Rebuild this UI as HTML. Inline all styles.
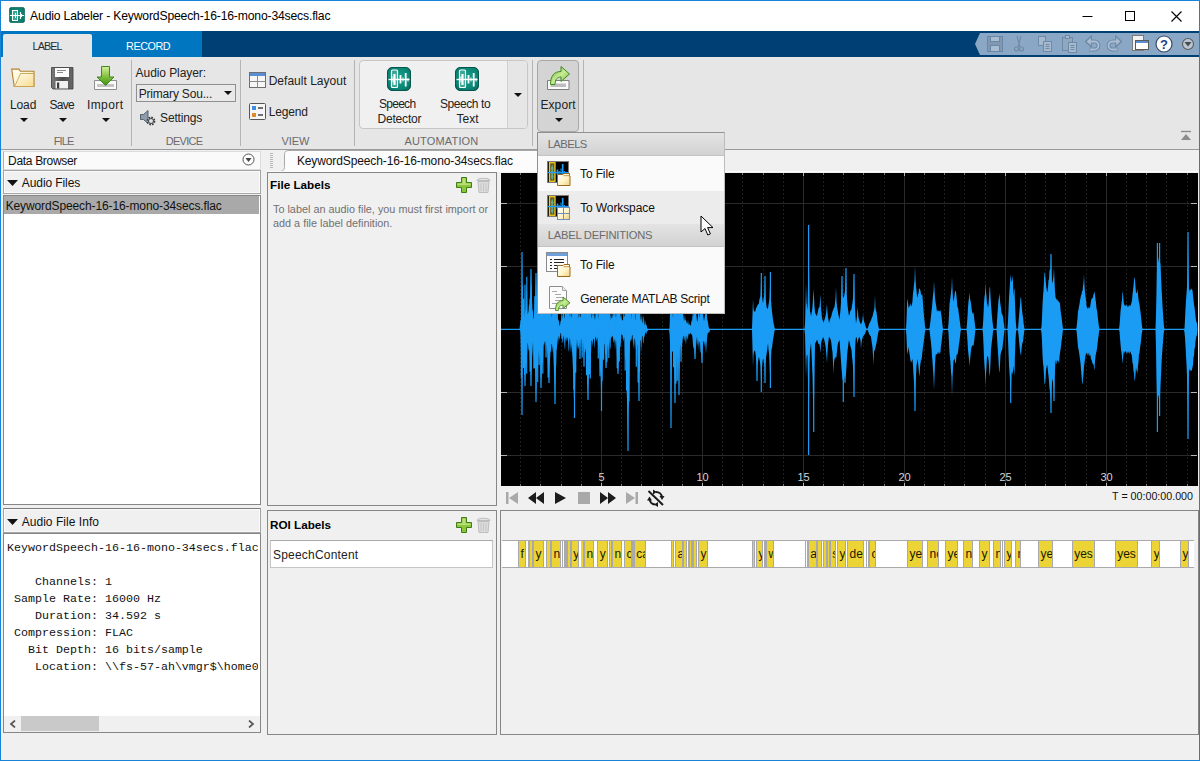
<!DOCTYPE html>
<html lang="en">
<head>
<meta charset="utf-8">
<title>Audio Labeler - KeywordSpeech-16-16-mono-34secs.flac</title>
<style>
*{box-sizing:border-box;margin:0;padding:0}
html,body{width:1200px;height:761px;overflow:hidden}
body{position:relative;background:#f0f0f0;font-family:"Liberation Sans",sans-serif;font-size:12px;color:#1a1a1a}
.abs,.abs>*{position:absolute}
#win{position:absolute;left:0;top:0;width:1200px;height:761px;border:1px solid #1883d7;pointer-events:none;z-index:50}
/* title bar */
#title{left:1px;top:1px;width:1198px;height:30px;background:#fff}
#title .t{top:8px;font-size:12.2px;color:#000;white-space:nowrap}
/* tab strip */
#tabs{left:1px;top:31px;width:1198px;height:26px;background:#003f73}
#tabL{left:2px;top:3px;width:89px;height:24px;background:#e6e6e6;border-radius:2px 2px 0 0;z-index:1}
.tb{font-size:10.8px;white-space:nowrap;z-index:2}
#tabR{left:0;top:0;width:201px;height:26px;background:#0076c0}
#qab{left:974px;top:2px;width:224px;height:22px}
/* toolstrip */
#ts{left:1px;top:57px;width:1198px;height:93px;background:#e6e6e6;border-bottom:1px solid #9a9a9a}
.sep{width:1px;top:3px;height:86px;background:#b4b4b4}
.sec{top:78px;font-size:11px;color:#6a6a6a;white-space:nowrap}
.bl{font-size:12px;color:#222;text-align:center;white-space:nowrap;line-height:15px}
.arr{width:0;height:0;border-left:4px solid transparent;border-right:4px solid transparent;border-top:4px solid #111}
.tx{white-space:nowrap;color:#222;font-size:12px}
</style>
</head>
<body>
<div id="win"></div>

<!-- TITLE BAR -->
<div id="title" class="abs">
  <svg style="left:8px;top:6px" width="16" height="16" viewBox="0 0 16 16">
    <defs><radialGradient id="ag" cx="0.5" cy="0.5" r="0.75"><stop offset="0" stop-color="#1a9a88"/><stop offset="1" stop-color="#086a5c"/></radialGradient></defs>
    <rect x="0.300" y="0.300" width="15.400" height="15.400" rx="2.500" fill="url(#ag)" stroke="#0a6256" stroke-width="0.600"/>
    <rect x="3.500" y="3.500" width="5" height="10" fill="#3aa898" stroke="#fff" stroke-width="1"/>
    <path d="M1 8.500H15M6.500 6v5" stroke="#fff" stroke-width="1" fill="none"/>
    <path d="M11.500 5v7M12.500 7v3M13.500 8v1" stroke="#fff" stroke-width="1.100" fill="none"/>
  </svg>
  <div class="t" style="left:29.10px;letter-spacing:-0.179px">Audio Labeler - KeywordSpeech-16-16-mono-34secs.flac</div>
  <svg style="left:1080px;top:9px" width="110" height="14" viewBox="0 0 110 14">
    <path d="M1.5 6.5h10" stroke="#000" stroke-width="1"/>
    <rect x="44.5" y="1.5" width="9" height="9" fill="none" stroke="#000" stroke-width="1"/>
    <path d="M90.5 1.5l10 10M100.500 1.5l-10 10" stroke="#000" stroke-width="1.1"/>
  </svg>
</div>

<!-- TAB STRIP -->
<div id="tabs" class="abs">
  <div id="tabL"></div><div class="tb" style="left:31.59px;letter-spacing:-0.950px;top:9px;color:#2a2a2a">LABEL</div>
  <div id="tabR"></div><div class="tb" style="left:125.10px;letter-spacing:-0.459px;top:9px;color:#fff">RECORD</div>
  <svg id="qab" viewBox="0 0 224 22">
    <path d="M0 11L5 0H224V22H5Z" fill="#8aa8c6"/>
    <!-- save -->
    <g fill="#7590ac" stroke="#6b87a4" stroke-width="1">
      <rect x="12.500" y="3.500" width="15" height="15" fill="#8198b2"/>
      <rect x="15.500" y="3.500" width="9" height="5" fill="#a9bdd2"/>
      <rect x="15.500" y="12.500" width="9" height="6" fill="#a9bdd2"/>
    </g>
    <!-- scissors -->
    <g fill="none" stroke="#6f8aa6" stroke-width="1.1">
      <path d="M46 3l-3 11M42 3l3 11"/><circle cx="41.500" cy="16" r="2"/><circle cx="46.500" cy="16" r="2"/>
    </g>
    <!-- copy -->
    <g fill="#a5b9cf" stroke="#6f8aa6" stroke-width="1">
      <rect x="63.500" y="3.500" width="7" height="9"/><rect x="68.500" y="8.500" width="8" height="10"/>
      <path d="M70.500 11.5h4M70.500 13.5h4M70.500 15.5h4" />
    </g>
    <!-- paste -->
    <g fill="#a5b9cf" stroke="#6f8aa6" stroke-width="1">
      <rect x="87.500" y="4.500" width="10" height="13" fill="#90a7c0"/><rect x="90.500" y="2.500" width="4" height="3"/>
      <rect x="93.500" y="9.500" width="8" height="10"/><path d="M95.500 12.500h4M95.500 14.500h4M95.500 16.500h4"/>
    </g>
    <!-- undo -->
    <g fill="none" stroke-linejoin="round">
      <path d="M115 8.500h4.500a4 4 0 0 1 0 8h-5" stroke="#6f8aa6" stroke-width="4"/>
      <path d="M116.500 2.500l-6.500 6 6.500 6z" fill="#6f8aa6" stroke="#6f8aa6"/>
      <path d="M115 8.500h4.500a4 4 0 0 1 0 8h-4.500" stroke="#a9bdd3" stroke-width="1.800"/>
      <path d="M115.800 4.800l-4.200 3.700 4.200 3.700z" fill="#a9bdd3"/>
    </g>
    <!-- redo -->
    <g fill="none" stroke-linejoin="round">
      <path d="M142 8.500h-4.500a4 4 0 0 0 0 8h5" stroke="#6f8aa6" stroke-width="4"/>
      <path d="M140.500 2.500l6.500 6-6.500 6z" fill="#6f8aa6" stroke="#6f8aa6"/>
      <path d="M142 8.500h-4.500a4 4 0 0 0 0 8h4.500" stroke="#a9bdd3" stroke-width="1.800"/>
      <path d="M141.200 4.800l4.200 3.700-4.200 3.700z" fill="#a9bdd3"/>
    </g>
    <!-- windows -->
    <g stroke="#7b7b7b" stroke-width="1">
      <rect x="157.500" y="2.500" width="11" height="15" fill="#f2f2f2"/>
      <rect x="160.500" y="7.500" width="13" height="9" fill="#fff" stroke="#5a5a5a"/>
      <rect x="161" y="8" width="12" height="2" fill="#5b8ed0" stroke="none"/>
    </g>
    <!-- help -->
    <circle cx="189" cy="11" r="8" fill="#fdfdfd" stroke="#3a4a68" stroke-width="1.2"/>
    <text x="189" y="15.500" text-anchor="middle" font-family="Liberation Sans,sans-serif" font-weight="bold" font-size="13" fill="#1f3f8a">?</text>
    <!-- dropdown -->
    <circle cx="213" cy="11" r="5.500" fill="#b9c5d3" stroke="#5c5c5c" stroke-width="1.1"/>
    <path d="M209.500 9h7l-3.500 4.500z" fill="#4a4a4a"/>
  </svg>
</div>

<!-- TOOLSTRIP -->
<div id="ts" class="abs">
  <!-- FILE -->
  <svg style="left:9px;top:9px" width="27" height="24" viewBox="0 0 27 24">
    <defs><linearGradient id="fg" x1="0" y1="0" x2="1" y2="1"><stop offset="0" stop-color="#ffffff"/><stop offset="0.45" stop-color="#fff6d2"/><stop offset="1" stop-color="#f1cf72"/></linearGradient>
    <linearGradient id="fg2" x1="0" y1="0" x2="1" y2="1"><stop offset="0" stop-color="#fffdf2"/><stop offset="1" stop-color="#f6dc8e"/></linearGradient></defs>
    <path d="M1.700 3.100h7.300l1.300 2.200h13.700v15.200h-19.800z" fill="url(#fg)" stroke="#b5822c" stroke-width="1.100"/>
    <path d="M10.500 7.500h13.300v13h-19.600c2.500-3.500 4-8 6.300-13z" fill="url(#fg2)" stroke="#c9a04e" stroke-width="0.900"/>
  </svg>
  <svg style="left:50px;top:10px" width="23" height="23" viewBox="0 0 23 23">
    <defs><linearGradient id="sg" x1="0" y1="0" x2="1" y2="0"><stop offset="0" stop-color="#7c7c7c"/><stop offset="0.5" stop-color="#4a4a4a"/><stop offset="1" stop-color="#6a6a6a"/></linearGradient></defs>
    <path d="M0.500 0.500h21.500v21.500h-20l-1.500-1.500z" fill="url(#sg)" stroke="#3a3a3a" stroke-width="0.800"/>
    <rect x="4" y="1" width="14" height="9" fill="#fbfbfb"/>
    <path d="M6 3.500h9M6 5.500h6" stroke="#8a8a8a"/>
    <rect x="4.500" y="14" width="12.500" height="7.500" fill="#f1f1f1"/>
    <rect x="6" y="15.500" width="2.200" height="6" fill="#3c3c3c"/>
  </svg>
  <svg style="left:92px;top:8px" width="25" height="26" viewBox="0 0 25 26">
    <defs><linearGradient id="gg" x1="0" y1="0" x2="0" y2="1"><stop offset="0" stop-color="#d5f0a0"/><stop offset="0.5" stop-color="#86c440"/><stop offset="1" stop-color="#3f8f18"/></linearGradient></defs>
    <path d="M1.500 15.500h22v9h-22z" fill="#fafafa" stroke="#8e8e8e"/>
    <path d="M4 19h17v3h-17z" fill="#c4c4c4"/>
    <path d="M8.500 1.500h8v10.500h4.500l-8.500 8.500-8.500-8.500h4.500z" fill="url(#gg)" stroke="#3f8a1c"/>
  </svg>
  <div class="tx" style="left:8.90px;letter-spacing:-0.068px;top:41px">Load</div>
  <div class="tx" style="left:48.60px;letter-spacing:-0.786px;top:41px">Save</div>
  <div class="tx" style="left:85.99px;letter-spacing:0.400px;top:41px">Import</div>
  <div class="arr" style="left:19px;top:61px"></div>
  <div class="arr" style="left:58px;top:61px"></div>
  <div class="arr" style="left:101px;top:61px"></div>
  <div class="sec" style="left:52.65px;letter-spacing:-0.845px">FILE</div>
  <div class="sep" style="left:130px"></div>

  <!-- DEVICE -->
  <div class="tx" style="left:134.60px;letter-spacing:-0.073px;top:9px">Audio Player:</div>
  <div style="left:135px;top:27px;width:100px;height:18px;border:1px solid #8f8f8f;background:#e9e9e9"></div>
  <div class="tx" style="left:137.70px;letter-spacing:-0.187px;top:30px">Primary Sou...</div>
  <div class="arr" style="left:223px;top:34px"></div>
  <svg style="left:138px;top:52px" width="20" height="18" viewBox="0 0 20 18">
    <path d="M1.500 5.500h3l4.500-4v13l-4.500-4h-3z" fill="#8d9cab" stroke="#56616d"/>
    <circle cx="12" cy="12" r="3.600" fill="#e6e6e6" stroke="#3c3c3c" stroke-width="1.600" stroke-dasharray="1.700 1.100"/>
    <circle cx="12" cy="12" r="2.500" fill="none" stroke="#3c3c3c" stroke-width="1"/>
  </svg>
  <div class="tx" style="left:159.10px;letter-spacing:-0.166px;top:54px">Settings</div>
  <div class="sec" style="left:164.65px;letter-spacing:-0.704px">DEVICE</div>
  <div class="sep" style="left:239px"></div>

  <!-- VIEW -->
  <svg style="left:248px;top:15px" width="17" height="16" viewBox="0 0 17 16">
    <rect x="0.500" y="0.500" width="16" height="15" fill="#f6f6f6" stroke="#6e6e6e"/>
    <rect x="1" y="1" width="15" height="3" fill="#5b8ed0"/>
    <path d="M8.500 4v11.500M0.500 9.500h16" stroke="#8a8a8a"/>
  </svg>
  <div class="tx" style="left:267.70px;letter-spacing:0.016px;top:17px">Default Layout</div>
  <svg style="left:248px;top:46px" width="17" height="17" viewBox="0 0 17 17">
    <rect x="0.500" y="0.500" width="16" height="16" rx="1" fill="#f6f6f6" stroke="#555"/>
    <rect x="3" y="3" width="4" height="4" fill="#3f8ee0"/><rect x="3" y="10" width="4" height="4" fill="#e08a2e"/>
    <path d="M9 5h5M9 12h5" stroke="#444" stroke-width="1.400"/>
  </svg>
  <div class="tx" style="left:267.70px;letter-spacing:-0.169px;top:48px">Legend</div>
  <div class="sec" style="left:280.40px;letter-spacing:-0.058px">VIEW</div>
  <div class="sep" style="left:353px"></div>

  <!-- AUTOMATION gallery -->
  <div style="left:358px;top:3px;width:169px;height:69px;border:1px solid #c6c6c6;border-radius:4px;background:#f0f0f0"></div>
  <div style="left:506px;top:4px;width:1px;height:67px;background:#d0d0d0"></div>
  <div style="left:507px;top:4px;width:19px;height:67px;background:#e6e6e6;border-radius:0 3px 3px 0"></div>
  <div class="arr" style="left:513px;top:36px"></div>
  <svg class="teal" style="left:386px;top:10px" width="24" height="24" viewBox="0 0 24 24"><use href="#teal"/></svg>
  <svg class="teal" style="left:454px;top:10px" width="24" height="24" viewBox="0 0 24 24"><use href="#teal"/></svg>
  <div class="tx" style="left:377.90px;letter-spacing:-0.701px;top:40px">Speech</div><div class="tx" style="left:376.40px;letter-spacing:-0.166px;top:54.500px">Detector</div>
  <div class="tx" style="left:438.90px;letter-spacing:-0.418px;top:40px">Speech to</div><div class="tx" style="left:455.40px;letter-spacing:0.061px;top:54.500px">Text</div>
  <div class="sec" style="left:403.40px;letter-spacing:0.175px">AUTOMATION</div>
  <div class="sep" style="left:531px"></div>

  <!-- EXPORT -->
  <div style="left:536px;top:3px;width:42px;height:72px;border:1px solid #a8a8a8;border-radius:4px;background:#d4d4d4"></div>
  <svg style="left:545px;top:8px" width="26" height="27" viewBox="0 0 26 27">
    <defs><linearGradient id="eg" x1="0" y1="0" x2="1" y2="1"><stop offset="0" stop-color="#5aa82a"/><stop offset="0.5" stop-color="#c9ec96"/><stop offset="1" stop-color="#6db53a"/></linearGradient></defs>
    <path d="M1.500 15.500h21.500v9h-21.500z" fill="#fbfbfb" stroke="#7e7e7e"/>
    <path d="M4.500 18.500h15.500v3.500h-15.500z" fill="#bdbdbd"/>
    <path d="M4.500 19.500c0-8.500 3.500-13 10.500-13v-5l8.500 7.500-8.500 7.500v-4.500c-4 0-5.500 2-6 7.500z" fill="url(#eg)" stroke="#3f8a1c"/>
  </svg>
  <div class="tx" style="left:539.40px;letter-spacing:0.103px;top:41px">Export</div>
  <div class="arr" style="left:554px;top:61px"></div>
  <div class="sep" style="left:582px"></div>

  <!-- collapse -->
  <svg style="left:1179px;top:73px" width="12" height="12" viewBox="0 0 12 12">
    <path d="M1 1.500h10" stroke="#8c8c8c" stroke-width="1.400"/><path d="M6 4l5 6h-10z" fill="#8c8c8c"/>
  </svg>
</div>

<svg width="0" height="0" style="position:absolute">
  <defs>
    <radialGradient id="tg" cx="0.5" cy="0.45" r="0.7"><stop offset="0" stop-color="#14a18e"/><stop offset="0.7" stop-color="#0b8474"/><stop offset="1" stop-color="#066256"/></radialGradient>
    <g id="teal">
      <rect x="0.500" y="0.500" width="23" height="23" rx="4.500" fill="url(#tg)" stroke="#05574d"/>
      <rect x="4.500" y="3" width="6" height="17.500" rx="1" fill="#3aa697" stroke="#fff" stroke-width="1.200"/>
      <path d="M1.500 12.500H22.500" stroke="#fff" stroke-width="1.300"/>
      <path d="M7.500 7v11" stroke="#fff" stroke-width="2.200"/>
      <path d="M13.500 8v8.500M18.700 6v13.500" stroke="#fff" stroke-width="1.800"/>
      <path d="M16 10.500v4M21 11v3.500M6 9.500v6" stroke="#fff" stroke-width="1"/>
    </g>
  </defs>
</svg>

<style>
.pn{position:absolute;border:1px solid #868686;background:#f0f0f0}
.hd{position:absolute;font-size:12px;color:#111;white-space:nowrap}
.ar{font-family:"Liberation Sans",sans-serif}
#strip{position:absolute;left:502px;top:540px;width:692px;height:28px;background:#fff;border-top:1px solid #a9a9ad;border-bottom:1px solid #a9a9ad;overflow:hidden}
#strip>*{position:absolute;top:0;height:26px}
#strip .g{background:#a9a9ad}
#strip .yy{background:#edd436}
#strip .y,#strip .yc{background:#edd436;font-size:12px;line-height:26px;color:#1a1a00;overflow:hidden;white-space:nowrap;padding-left:1.500px}
#strip .yc{text-align:center;padding-left:0}
#pop{position:absolute;left:537px;top:132px;width:188px;height:182px;border:1px solid #909090;border-right-color:#bcbcbc;border-bottom-color:#bcbcbc;background:#fafafa;z-index:20}
#pop>*{position:absolute}
#pop .ph{left:0;width:186px;height:23px;background:linear-gradient(#e4e4e4,#d2d2d2);border-bottom:1px solid #c4c4c4}
#pop .pt{color:#6a6a6a;font-size:11.200px;white-space:nowrap;margin-top:0}
#pop .pi{font-size:12px;color:#111;white-space:nowrap}
.mono{font-family:"Liberation Mono",monospace;font-size:11.667px;line-height:17px;white-space:pre;color:#111}
</style>

<!-- DATA BROWSER -->
<div class="abs">
  <div style="left:3px;top:151px;width:258px;height:19px;border:1px solid #dcdcdc;border-left-color:#b0b0b0;background:#fafafa"></div>
  <div class="hd" style="left:8.10px;letter-spacing:-0.318px;top:154px">Data Browser</div>
  <svg style="left:242px;top:153px" width="13" height="13" viewBox="0 0 13 13"><circle cx="6.500" cy="6.500" r="5.500" fill="#fdfdfd" stroke="#555" stroke-width="1"/><path d="M3.500 5h6l-3 4z" fill="#444"/></svg>

  <div style="left:3px;top:170px;width:258px;height:24px;border:1px solid #a5a5a5;background:#f0f0f0;box-shadow:inset 0 0 0 1px #fafafa"></div>
  <svg style="left:7px;top:180px" width="11" height="7" viewBox="0 0 11 7"><path d="M0 0h11l-5.500 6z" fill="#111"/></svg>
  <div class="hd" style="left:21.80px;letter-spacing:-0.087px;top:176px">Audio Files</div>
  <div style="left:3px;top:195px;width:258px;height:310px;border:1px solid #868686;background:#fff"></div>
  <div style="left:4px;top:196px;width:255px;height:18px;background:#a9a9a9"></div>
  <div class="hd" style="left:5.65px;letter-spacing:-0.112px;top:199px">KeywordSpeech-16-16-mono-34secs.flac</div>

  <div style="left:3px;top:508px;width:258px;height:25px;border:1px solid #a5a5a5;border-top-color:#7c7c7c;background:#f0f0f0;box-shadow:inset 0 0 0 1px #fafafa"></div>
  <svg style="left:7px;top:519px" width="11" height="7" viewBox="0 0 11 7"><path d="M0 0h11l-5.500 6z" fill="#111"/></svg>
  <div class="hd" style="left:21.70px;letter-spacing:0.042px;top:515px">Audio File Info</div>
  <div style="left:3px;top:533px;width:258px;height:200px;border:1px solid #868686;background:#fff;overflow:hidden">
    <div class="mono" style="position:absolute;left:3px;top:6px;width:251px;overflow:hidden">KeywordSpeech-16-16-mono-34secs.flac

    Channels: 1
 Sample Rate: 16000 Hz
    Duration: 34.592 s
 Compression: FLAC
   Bit Depth: 16 bits/sample
    Location: \\fs-57-ah\vmgr$\home0</div>
    <div style="position:absolute;left:0;top:182px;width:256px;height:16px;background:#f0f0f0"></div>
    <div style="position:absolute;left:17px;top:182px;width:78px;height:15px;background:#c9c9c9"></div>
    <svg style="position:absolute;left:5px;top:186px" width="8" height="8" viewBox="0 0 8 8"><path d="M6 0.500l-4 3.500 4 3.500" fill="none" stroke="#555" stroke-width="1.700"/></svg>
    <svg style="position:absolute;left:243px;top:186px" width="8" height="8" viewBox="0 0 8 8"><path d="M2 0.500l4 3.500-4 3.500" fill="none" stroke="#555" stroke-width="1.700"/></svg>
  </div>
</div>

<!-- DOCUMENT TAB -->
<div class="abs">
  <svg style="left:270px;top:153px" width="3" height="16" viewBox="0 0 3 16"><path d="M1.500 0v16" stroke="#b8b8b8" stroke-width="3" stroke-dasharray="1 1"/></svg>
  <svg style="left:279px;top:150px" width="261" height="22" viewBox="0 0 261 22">
    <path d="M0 21.500c4 0 5.500-1.500 5.500-5v-12c0-3 1.500-4 4.500-4h251v21z" fill="#fcfcfc"/>
    <path d="M0 21.500c4 0 5.500-1.500 5.500-5v-12c0-3 1.500-4 4.500-4h251" fill="none" stroke="#a8a8a8"/>
  </svg>
  <div class="hd" style="left:296.90px;letter-spacing:-0.112px;top:154px">KeywordSpeech-16-16-mono-34secs.flac</div>
  <div style="left:267px;top:171px;width:931px;height:1px;background:#fbfbfb"></div>
</div>

<!-- FILE LABELS PANEL -->
<div class="pn" style="left:267px;top:172px;width:230px;height:334px"></div>
<div class="abs ar">
  <div style="left:270px;top:178px;font-weight:bold;font-size:11.700px;color:#000;white-space:nowrap">File Labels</div>
  <svg style="left:456px;top:177px" width="16" height="16" viewBox="0 0 16 16"><use href="#plus"/></svg>
  <svg style="left:476px;top:177px" width="15" height="16" viewBox="0 0 15 16"><use href="#trash"/></svg>
  <div style="left:273px;top:202px;font-size:10.850px;line-height:14px;color:#707070;white-space:nowrap">To label an audio file, you must first import or<br>add a file label definition.</div>
</div>

<!-- ROI LABELS PANEL -->
<div class="pn" style="left:267px;top:510px;width:230px;height:225px"></div>
<div class="abs ar">
  <div style="left:270px;top:518px;font-weight:bold;font-size:11.700px;color:#000;white-space:nowrap">ROI Labels</div>
  <svg style="left:456px;top:517px" width="16" height="16" viewBox="0 0 16 16"><use href="#plus"/></svg>
  <svg style="left:476px;top:517px" width="15" height="16" viewBox="0 0 15 16"><use href="#trash"/></svg>
  <div style="left:270px;top:540px;width:223px;height:28px;background:#fff;border:1px solid #c4c4c4;border-top-color:#a9a9a9"></div>
  <div style="left:273px;top:548px;font-size:12px;letter-spacing:0.2px;color:#222">SpeechContent</div>
</div>

<!-- WAVEFORM -->
<div style="position:absolute;left:501px;top:173px;width:697px;height:313px;background:#000"></div>
<svg style="position:absolute;left:0;top:0" width="1200" height="761" viewBox="0 0 1200 761">
  <g stroke="#2a2a2a" stroke-width="1">
    <path d="M501 203.500H1197M501 266.500H1197M501 392.500H1197M501 455.500H1197"/>
    <path d="M601.5 173V486M702.5 173V486M803.5 173V486M904.5 173V486M1005.5 173V486M1106.5 173V486"/>
  </g>
  <g stroke="#1e1e1e" stroke-width="1" stroke-dasharray="2 2"><path d="M520.5 173V486M540.5 173V486M561.5 173V486M581.5 173V486M621.5 173V486M641.5 173V486M662.5 173V486M682.5 173V486M722.5 173V486M742.5 173V486M763.5 173V486M783.5 173V486M823.5 173V486M843.5 173V486M863.5 173V486M884.5 173V486M924.5 173V486M944.5 173V486M964.5 173V486M985.5 173V486M1025.5 173V486M1045.5 173V486M1065.5 173V486M1086.5 173V486M1126.5 173V486M1146.5 173V486M1166.5 173V486M1187.5 173V486"/></g>
  <g stroke="#b4b4b4" stroke-width="1">
    <path d="M501 203.500h6M501 266.500h6M501 392.500h6M501 455.500h6M1191 203.500h6M1191 266.500h6M1191 392.500h6M1191 455.500h6"/>
    <path d="M601.5 173v3M601.5 483v3M702.5 173v3M702.5 483v3M803.5 173v3M803.5 483v3M904.5 173v3M904.5 483v3M1005.5 173v3M1005.5 483v3M1106.5 173v3M1106.5 483v3"/><path stroke="#7a7a7a" d="M520.5 173v2M520.5 484v2M540.5 173v2M540.5 484v2M561.5 173v2M561.5 484v2M581.5 173v2M581.5 484v2M621.5 173v2M621.5 484v2M641.5 173v2M641.5 484v2M662.5 173v2M662.5 484v2M682.5 173v2M682.5 484v2M722.5 173v2M722.5 484v2M742.5 173v2M742.5 484v2M763.5 173v2M763.5 484v2M783.5 173v2M783.5 484v2M823.5 173v2M823.5 484v2M843.5 173v2M843.5 484v2M863.5 173v2M863.5 484v2M884.5 173v2M884.5 484v2M924.5 173v2M924.5 484v2M944.5 173v2M944.5 484v2M964.5 173v2M964.5 484v2M985.5 173v2M985.5 484v2M1025.5 173v2M1025.5 484v2M1045.5 173v2M1045.5 484v2M1065.5 173v2M1065.5 484v2M1086.5 173v2M1086.5 484v2M1126.5 173v2M1126.5 484v2M1146.5 173v2M1146.5 484v2M1166.5 173v2M1166.5 484v2M1187.5 173v2M1187.5 484v2"/>
  </g>
  <g transform="translate(501 173)"><polygon fill="#1a9cf5" points="0.0,155.8 0.5,155.8 1.0,155.8 1.5,155.8 2.0,155.8 2.5,155.8 3.0,155.8 3.5,155.8 4.0,155.8 4.5,155.8 5.0,155.8 5.5,155.8 6.0,155.8 6.5,155.8 7.0,155.8 7.5,155.8 8.0,155.8 8.5,155.8 9.0,155.8 9.5,155.8 10.0,155.8 10.5,155.8 11.0,155.8 11.5,155.8 12.0,155.8 12.5,155.8 13.0,155.8 13.5,155.8 14.0,155.8 14.5,155.8 15.0,155.8 15.5,155.8 16.0,155.8 16.5,155.8 17.0,155.8 17.5,155.8 18.0,155.8 18.5,155.8 19.0,152.2 19.5,147.1 20.0,146.7 20.5,116.9 21.0,79.0 21.5,111.3 22.0,134.5 22.5,126.3 23.0,144.1 23.5,140.9 24.0,113.0 24.5,136.6 25.0,139.0 25.5,117.1 26.0,116.3 26.5,141.1 27.0,140.7 27.5,138.1 28.0,130.4 28.5,132.7 29.0,121.2 29.5,108.9 30.0,96.0 30.5,111.5 31.0,125.9 31.5,139.1 32.0,135.4 32.5,146.1 33.0,144.6 33.5,134.7 34.0,127.9 34.5,114.4 35.0,100.0 35.5,114.4 36.0,127.9 36.5,124.5 37.0,129.3 37.5,142.2 38.0,137.1 38.5,126.2 39.0,126.4 39.5,112.2 40.0,97.0 40.5,107.1 41.0,112.8 41.5,126.1 42.0,134.8 42.5,140.7 43.0,127.6 43.5,135.2 44.0,142.5 44.5,129.8 45.0,125.9 45.5,138.3 46.0,136.2 46.5,117.9 47.0,120.2 47.5,111.3 48.0,102.0 48.5,113.7 49.0,124.7 49.5,125.6 50.0,132.5 50.5,145.1 51.0,138.6 51.5,142.5 52.0,129.5 52.5,132.3 53.0,120.6 53.5,108.2 54.0,95.0 54.5,110.7 55.0,115.4 55.5,131.7 56.0,138.6 56.5,129.1 57.0,146.0 57.5,147.4 58.0,147.9 58.5,152.4 59.0,152.7 59.5,148.3 60.0,147.7 60.5,140.6 61.0,137.7 61.5,146.4 62.0,137.2 62.5,125.7 63.0,145.2 63.5,144.2 64.0,132.2 64.5,116.8 65.0,127.6 65.5,117.6 66.0,107.0 66.5,115.4 67.0,123.5 67.5,131.2 68.0,138.5 68.5,135.9 69.0,145.0 69.5,135.2 70.0,137.6 70.5,145.1 71.0,140.9 71.5,133.7 72.0,124.6 72.5,113.3 73.0,101.4 73.5,89.0 74.0,106.2 74.5,122.4 75.0,137.1 75.5,136.8 76.0,138.7 76.5,127.6 77.0,126.7 77.5,145.0 78.0,144.3 78.5,136.3 79.0,143.7 79.5,144.2 80.0,138.8 80.5,117.9 81.0,138.1 81.5,121.9 82.0,125.0 82.5,140.5 83.0,129.9 83.5,136.5 84.0,143.2 84.5,130.3 85.0,111.8 85.5,123.4 86.0,116.9 86.5,107.1 87.0,97.0 87.5,109.7 88.0,121.8 88.5,133.1 89.0,137.1 89.5,125.4 90.0,134.2 90.5,144.7 91.0,144.6 91.5,136.4 92.0,139.1 92.5,143.1 93.0,135.7 93.5,143.7 94.0,147.0 94.5,141.3 95.0,132.8 95.5,138.9 96.0,128.2 96.5,137.5 97.0,146.5 97.5,143.7 98.0,129.5 98.5,137.0 99.0,121.3 99.5,116.7 100.0,108.5 100.5,92.0 101.0,108.5 101.5,123.9 102.0,130.3 102.5,137.3 103.0,125.0 103.5,131.3 104.0,140.9 104.5,129.5 105.0,117.0 105.5,123.7 106.0,130.2 106.5,133.9 107.0,132.5 107.5,142.7 108.0,131.5 108.5,133.8 109.0,147.9 109.5,138.6 110.0,144.5 110.5,146.1 111.0,138.1 111.5,145.4 112.0,139.3 112.5,136.2 113.0,144.7 113.5,130.5 114.0,126.1 114.5,142.4 115.0,145.1 115.5,137.8 116.0,128.8 116.5,117.9 117.0,109.0 117.5,117.1 118.0,124.8 118.5,132.2 119.0,139.2 119.5,145.6 120.0,134.8 120.5,144.7 121.0,147.3 121.5,147.2 122.0,147.3 122.5,138.1 123.0,130.3 123.5,143.6 124.0,143.5 124.5,128.1 125.0,131.1 125.5,127.2 126.0,113.1 126.5,97.9 127.0,82.0 127.5,105.6 128.0,107.2 128.5,130.0 129.0,141.0 129.5,128.3 130.0,133.5 130.5,146.5 131.0,138.5 131.5,140.1 132.0,130.8 132.5,140.5 133.0,130.9 133.5,139.7 134.0,146.9 134.5,146.0 135.0,127.7 135.5,125.4 136.0,138.8 136.5,129.2 137.0,132.3 137.5,122.7 138.0,107.0 138.5,122.7 139.0,134.5 139.5,145.0 140.0,148.2 140.5,144.9 141.0,141.2 141.5,149.7 142.0,149.8 142.5,142.0 143.0,146.1 143.5,151.1 144.0,152.8 144.5,147.0 145.0,152.3 145.5,151.3 146.0,154.2 146.5,155.6 147.0,155.8 147.5,155.8 148.0,155.8 148.5,155.8 149.0,155.8 149.5,155.8 150.0,155.8 150.5,155.8 151.0,155.8 151.5,155.8 152.0,155.8 152.5,155.8 153.0,155.8 153.5,155.8 154.0,155.8 154.5,155.8 155.0,155.8 155.5,155.8 156.0,155.8 156.5,155.8 157.0,155.8 157.5,155.8 158.0,155.8 158.5,155.8 159.0,155.8 159.5,155.8 160.0,155.8 160.5,155.8 161.0,155.8 161.5,155.8 162.0,155.8 162.5,155.8 163.0,155.8 163.5,155.8 164.0,155.8 164.5,155.8 165.0,155.8 165.5,155.8 166.0,155.8 166.5,155.8 167.0,155.8 167.5,155.8 168.0,155.8 168.5,155.4 169.0,140.6 169.5,121.4 170.0,95.0 170.5,120.6 171.0,123.2 171.5,138.1 172.0,145.8 172.5,131.4 173.0,128.9 173.5,115.9 174.0,102.0 174.5,119.3 175.0,135.0 175.5,136.1 176.0,129.3 176.5,144.3 177.0,133.8 177.5,117.2 178.0,99.0 178.5,123.0 179.0,143.3 179.5,133.2 180.0,135.5 180.5,133.4 181.0,117.0 181.5,129.5 182.0,140.9 182.5,142.9 183.0,148.2 183.5,145.7 184.0,141.7 184.5,147.5 185.0,147.2 185.5,149.1 186.0,150.6 186.5,150.3 187.0,146.8 187.5,150.8 188.0,152.2 188.5,149.7 189.0,152.5 189.5,152.6 190.0,152.0 190.5,146.3 191.0,149.2 191.5,142.2 192.0,134.9 192.5,144.1 193.0,138.1 193.5,131.7 194.0,125.0 194.5,131.7 195.0,138.1 195.5,142.7 196.0,148.3 196.5,148.5 197.0,141.9 197.5,130.5 198.0,135.6 198.5,145.0 199.0,142.8 199.5,137.3 200.0,131.5 200.5,125.4 201.0,119.0 201.5,130.9 202.0,141.7 202.5,147.9 203.0,139.6 203.5,148.2 204.0,142.5 204.5,135.0 205.0,125.0 205.5,135.0 206.0,144.1 206.5,147.0 207.0,149.6 207.5,153.2 208.0,155.1 208.5,155.8 209.0,155.8 209.5,155.8 210.0,155.8 210.5,155.8 211.0,155.8 211.5,155.8 212.0,155.8 212.5,155.8 213.0,155.8 213.5,155.8 214.0,155.8 214.5,155.8 215.0,155.8 215.5,155.8 216.0,155.8 216.5,155.8 217.0,155.8 217.5,155.8 218.0,155.8 218.5,155.8 219.0,155.8 219.5,155.8 220.0,155.8 220.5,155.8 221.0,155.8 221.5,155.8 222.0,155.8 222.5,155.8 223.0,155.8 223.5,155.8 224.0,155.8 224.5,155.8 225.0,155.8 225.5,155.8 226.0,155.8 226.5,155.8 227.0,155.8 227.5,155.8 228.0,155.8 228.5,155.8 229.0,155.8 229.5,155.8 230.0,155.8 230.5,155.8 231.0,155.8 231.5,155.8 232.0,155.8 232.5,155.8 233.0,155.8 233.5,155.8 234.0,155.8 234.5,155.8 235.0,155.8 235.5,155.8 236.0,155.8 236.5,155.8 237.0,155.8 237.5,155.8 238.0,155.8 238.5,155.8 239.0,155.8 239.5,155.8 240.0,155.8 240.5,155.8 241.0,155.8 241.5,155.8 242.0,155.8 242.5,155.8 243.0,155.8 243.5,155.8 244.0,155.8 244.5,155.8 245.0,155.8 245.5,155.8 246.0,155.8 246.5,155.8 247.0,155.8 247.5,155.8 248.0,155.8 248.5,155.8 249.0,155.8 249.5,155.8 250.0,155.8 250.5,155.8 251.0,155.8 251.5,140.9 252.0,126.0 252.5,135.6 253.0,138.3 253.5,138.2 254.0,138.9 254.5,137.6 255.0,135.3 255.5,134.5 256.0,133.2 256.5,132.6 257.0,131.1 257.5,131.4 258.0,129.7 258.5,125.5 259.0,125.3 259.5,122.7 260.0,109.5 260.5,108.6 261.0,123.3 261.5,126.9 262.0,130.4 262.5,125.9 263.0,123.8 263.5,119.9 264.0,103.0 264.5,125.3 265.0,128.7 265.5,133.4 266.0,135.1 266.5,135.7 267.0,135.5 267.5,131.4 268.0,128.9 268.5,125.6 269.0,111.3 269.5,104.9 270.0,127.4 270.5,133.1 271.0,138.4 271.5,142.4 272.0,146.8 272.5,149.9 273.0,152.1 273.5,154.6 274.0,155.8 274.5,155.8 275.0,155.8 275.5,155.8 276.0,155.8 276.5,155.8 277.0,155.8 277.5,155.8 278.0,155.8 278.5,155.8 279.0,155.8 279.5,155.8 280.0,155.8 280.5,155.8 281.0,155.8 281.5,155.8 282.0,155.8 282.5,155.8 283.0,155.8 283.5,155.8 284.0,155.8 284.5,155.8 285.0,155.8 285.5,155.8 286.0,155.8 286.5,155.8 287.0,155.8 287.5,155.8 288.0,155.8 288.5,155.8 289.0,155.8 289.5,155.8 290.0,155.8 290.5,155.8 291.0,155.8 291.5,155.8 292.0,155.8 292.5,155.8 293.0,155.8 293.5,155.8 294.0,155.8 294.5,155.8 295.0,155.8 295.5,155.8 296.0,155.8 296.5,155.8 297.0,155.8 297.5,155.8 298.0,155.8 298.5,155.8 299.0,155.8 299.5,155.8 300.0,155.8 300.5,155.8 301.0,155.8 301.5,155.8 302.0,155.8 302.5,155.8 303.0,155.8 303.5,155.8 304.0,151.5 304.5,132.7 305.0,110.0 305.5,129.4 306.0,133.3 306.5,137.0 307.0,112.5 307.5,62.8 308.0,93.5 308.5,125.7 309.0,138.4 309.5,139.9 310.0,143.4 310.5,140.2 311.0,137.5 311.5,133.5 312.0,125.9 312.5,115.4 313.0,124.3 313.5,133.7 314.0,139.1 314.5,140.7 315.0,141.5 315.5,142.4 316.0,143.3 316.5,140.0 317.0,138.4 317.5,135.0 318.0,135.0 318.5,133.8 319.0,128.3 319.5,121.1 320.0,135.1 320.5,139.8 321.0,144.7 321.5,146.9 322.0,147.8 322.5,149.9 323.0,148.6 323.5,146.6 324.0,145.0 324.5,143.2 325.0,140.2 325.5,135.7 326.0,131.0 326.5,139.1 327.0,144.5 327.5,146.8 328.0,150.2 328.5,148.1 329.0,146.9 329.5,145.0 330.0,144.2 330.5,142.4 331.0,140.3 331.5,138.6 332.0,137.6 332.5,135.6 333.0,135.3 333.5,133.7 334.0,130.1 334.5,124.8 335.0,114.0 335.5,127.5 336.0,133.6 336.5,136.1 337.0,139.4 337.5,142.0 338.0,144.4 338.5,146.7 339.0,141.7 339.5,136.8 340.0,129.4 340.5,116.7 341.0,103.0 341.5,121.8 342.0,125.6 342.5,124.2 343.0,123.5 343.5,121.1 344.0,117.9 344.5,109.6 345.0,95.0 345.5,120.6 346.0,125.4 346.5,131.7 347.0,136.6 347.5,140.0 348.0,142.8 348.5,141.7 349.0,139.7 349.5,137.1 350.0,137.7 350.5,135.6 351.0,132.8 351.5,129.3 352.0,125.6 352.5,115.2 353.0,101.0 353.5,126.1 354.0,134.2 354.5,143.2 355.0,150.3 355.5,147.2 356.0,143.2 356.5,134.0 357.0,138.6 357.5,144.5 358.0,146.3 358.5,148.2 359.0,149.2 359.5,150.5 360.0,151.6 360.5,150.1 361.0,148.8 361.5,145.9 362.0,141.0 362.5,145.9 363.0,148.3 363.5,149.7 364.0,151.5 364.5,152.9 365.0,154.5 365.5,155.8 366.0,155.8 366.5,155.8 367.0,154.4 367.5,153.1 368.0,151.3 368.5,150.3 369.0,149.3 369.5,148.4 370.0,146.9 370.5,145.8 371.0,144.3 371.5,143.4 372.0,141.0 372.5,139.1 373.0,137.2 373.5,134.2 374.0,122.0 374.5,134.8 375.0,137.8 375.5,139.1 376.0,143.0 376.5,147.8 377.0,151.2 377.5,153.8 378.0,155.8 378.5,155.8 379.0,155.8 379.5,155.8 380.0,155.8 380.5,155.8 381.0,155.8 381.5,155.8 382.0,155.8 382.5,155.8 383.0,155.8 383.5,155.8 384.0,155.8 384.5,155.8 385.0,155.8 385.5,155.8 386.0,155.8 386.5,155.8 387.0,155.8 387.5,155.8 388.0,155.8 388.5,155.8 389.0,155.8 389.5,155.8 390.0,155.8 390.5,155.8 391.0,155.8 391.5,155.8 392.0,155.8 392.5,155.8 393.0,155.8 393.5,155.8 394.0,155.8 394.5,155.8 395.0,155.8 395.5,155.8 396.0,155.8 396.5,155.8 397.0,155.8 397.5,155.8 398.0,155.8 398.5,155.8 399.0,155.8 399.5,155.8 400.0,155.8 400.5,155.8 401.0,155.8 401.5,155.8 402.0,155.8 402.5,155.8 403.0,155.8 403.5,155.8 404.0,155.8 404.5,155.8 405.0,155.8 405.5,147.2 406.0,131.0 406.5,125.5 407.0,129.3 407.5,134.2 408.0,135.1 408.5,131.9 409.0,133.3 409.5,129.8 410.0,132.4 410.5,133.4 411.0,131.6 411.5,127.8 412.0,120.0 412.5,116.9 413.0,111.8 413.5,107.4 414.0,93.0 414.5,105.5 415.0,113.5 415.5,117.8 416.0,122.8 416.5,124.8 417.0,121.2 417.5,120.6 418.0,115.7 418.5,115.4 419.0,116.2 419.5,118.1 420.0,120.9 420.5,122.7 421.0,120.8 421.5,123.0 422.0,130.8 422.5,136.7 423.0,143.3 423.5,148.1 424.0,153.3 424.5,155.8 425.0,155.8 425.5,155.8 426.0,155.8 426.5,155.8 427.0,155.8 427.5,155.8 428.0,155.8 428.5,154.9 429.0,151.9 429.5,147.8 430.0,143.3 430.5,138.0 431.0,134.0 431.5,127.9 432.0,122.3 432.5,118.3 433.0,108.0 433.5,116.9 434.0,124.5 434.5,128.8 435.0,131.7 435.5,135.1 436.0,138.9 436.5,137.3 437.0,137.6 437.5,137.8 438.0,138.5 438.5,138.2 439.0,137.8 439.5,137.0 440.0,140.4 440.5,143.1 441.0,148.1 441.5,152.4 442.0,155.8 442.5,155.8 443.0,155.8 443.5,155.8 444.0,155.8 444.5,155.8 445.0,155.8 445.5,155.8 446.0,155.8 446.5,155.8 447.0,155.8 447.5,150.4 448.0,141.7 448.5,130.8 449.0,128.1 449.5,123.5 450.0,118.9 450.5,115.1 451.0,104.0 451.5,115.6 452.0,125.0 452.5,128.8 453.0,125.9 453.5,122.4 454.0,118.5 454.5,117.7 455.0,118.8 455.5,123.2 456.0,129.4 456.5,134.4 457.0,134.5 457.5,138.2 458.0,142.0 458.5,146.0 459.0,149.4 459.5,154.0 460.0,155.8 460.5,155.8 461.0,155.8 461.5,155.8 462.0,155.8 462.5,155.8 463.0,155.8 463.5,155.8 464.0,155.8 464.5,155.8 465.0,155.8 465.5,155.8 466.0,151.1 466.5,143.2 467.0,134.5 467.5,128.6 468.0,124.9 468.5,118.9 469.0,125.7 469.5,127.8 470.0,130.7 470.5,134.7 471.0,138.8 471.5,140.7 472.0,139.4 472.5,140.1 473.0,143.2 473.5,148.1 474.0,152.0 474.5,155.8 475.0,155.8 475.5,155.8 476.0,155.8 476.5,155.8 477.0,155.8 477.5,155.8 478.0,155.8 478.5,155.8 479.0,155.8 479.5,155.8 480.0,155.8 480.5,155.8 481.0,155.8 481.5,155.8 482.0,151.2 482.5,141.5 483.0,129.9 483.5,124.0 484.0,120.8 484.5,110.1 485.0,119.1 485.5,123.4 486.0,131.2 486.5,131.3 487.0,134.9 487.5,131.6 488.0,124.5 488.5,115.1 489.0,113.6 489.5,123.2 490.0,130.9 490.5,137.7 491.0,144.1 491.5,148.4 492.0,152.7 492.5,155.8 493.0,155.8 493.5,155.8 494.0,155.8 494.5,155.8 495.0,155.8 495.5,155.8 496.0,147.7 496.5,140.3 497.0,134.0 497.5,126.9 498.0,124.1 498.5,120.2 499.0,127.7 499.5,132.0 500.0,135.0 500.5,139.2 501.0,141.6 501.5,141.6 502.0,144.1 502.5,147.5 503.0,151.3 503.5,155.3 504.0,155.8 504.5,155.8 505.0,155.8 505.5,155.8 506.0,155.8 506.5,155.8 507.0,147.8 507.5,136.5 508.0,125.3 508.5,117.5 509.0,109.5 509.5,101.8 510.0,105.0 510.5,109.5 511.0,107.2 511.5,102.2 512.0,109.2 512.5,122.9 513.0,116.8 513.5,115.7 514.0,130.6 514.5,142.9 515.0,152.3 515.5,155.8 516.0,155.8 516.5,155.8 517.0,155.8 517.5,149.4 518.0,143.2 518.5,137.2 519.0,131.8 519.5,124.7 520.0,124.1 520.5,130.5 521.0,137.1 521.5,141.2 522.0,144.2 522.5,149.5 523.0,152.9 523.5,155.8 524.0,155.8 524.5,155.8 525.0,155.8 525.5,155.8 526.0,155.8 526.5,155.8 527.0,155.8 527.5,155.8 528.0,155.8 528.5,155.8 529.0,155.8 529.5,155.8 530.0,155.8 530.5,155.8 531.0,155.8 531.5,155.8 532.0,155.8 532.5,155.8 533.0,155.8 533.5,155.8 534.0,155.8 534.5,155.8 535.0,155.8 535.5,155.8 536.0,155.8 536.5,155.8 537.0,155.8 537.5,155.8 538.0,155.8 538.5,155.8 539.0,155.8 539.5,155.8 540.0,155.8 540.5,153.6 541.0,144.6 541.5,131.6 542.0,123.0 542.5,117.4 543.0,106.6 543.5,99.1 544.0,100.6 544.5,106.0 545.0,111.7 545.5,115.5 546.0,117.9 546.5,119.2 547.0,114.2 547.5,107.1 548.0,106.5 548.5,97.6 549.0,96.2 549.5,96.2 550.0,81.0 550.5,100.0 551.0,108.5 551.5,110.3 552.0,106.3 552.5,102.7 553.0,94.0 553.5,108.3 554.0,118.4 554.5,124.3 555.0,125.4 555.5,126.0 556.0,127.7 556.5,125.7 557.0,128.4 557.5,127.7 558.0,129.2 558.5,129.5 559.0,130.6 559.5,136.7 560.0,140.9 560.5,143.8 561.0,148.0 561.5,152.5 562.0,155.8 562.5,155.8 563.0,155.8 563.5,155.8 564.0,155.8 564.5,155.8 565.0,155.8 565.5,155.8 566.0,155.8 566.5,155.8 567.0,155.8 567.5,155.8 568.0,155.8 568.5,155.8 569.0,155.8 569.5,155.8 570.0,155.8 570.5,155.8 571.0,155.8 571.5,155.8 572.0,155.8 572.5,155.8 573.0,155.8 573.5,155.8 574.0,155.8 574.5,155.8 575.0,155.8 575.5,154.9 576.0,150.3 576.5,145.2 577.0,138.4 577.5,136.3 578.0,133.4 578.5,131.0 579.0,127.4 579.5,124.9 580.0,122.3 580.5,121.4 581.0,118.3 581.5,118.1 582.0,113.1 582.5,109.7 583.0,101.0 583.5,113.0 584.0,118.9 584.5,123.4 585.0,126.7 585.5,133.2 586.0,134.6 586.5,136.0 587.0,133.5 587.5,135.7 588.0,133.4 588.5,135.6 589.0,134.7 589.5,131.2 590.0,128.2 590.5,125.8 591.0,125.5 591.5,125.1 592.0,124.4 592.5,121.2 593.0,120.0 593.5,118.4 594.0,122.2 594.5,125.9 595.0,130.0 595.5,135.5 596.0,137.5 596.5,141.2 597.0,146.1 597.5,150.1 598.0,153.8 598.5,155.8 599.0,155.8 599.5,155.8 600.0,155.8 600.5,155.8 601.0,155.8 601.5,155.8 602.0,155.8 602.5,155.8 603.0,155.8 603.5,155.8 604.0,155.8 604.5,155.8 605.0,155.8 605.5,155.8 606.0,155.8 606.5,155.8 607.0,155.8 607.5,155.8 608.0,155.8 608.5,155.8 609.0,155.8 609.5,155.8 610.0,155.8 610.5,155.8 611.0,155.8 611.5,155.8 612.0,155.8 612.5,155.8 613.0,155.8 613.5,155.8 614.0,155.8 614.5,155.8 615.0,155.8 615.5,155.8 616.0,155.8 616.5,155.8 617.0,155.8 617.5,155.8 618.0,155.8 618.5,152.6 619.0,146.4 619.5,138.4 620.0,134.4 620.5,130.2 621.0,126.5 621.5,118.0 622.0,121.2 622.5,127.2 623.0,131.6 623.5,131.8 624.0,133.2 624.5,132.3 625.0,133.0 625.5,131.4 626.0,131.7 626.5,134.1 627.0,133.7 627.5,133.5 628.0,131.7 628.5,133.4 629.0,131.0 629.5,133.5 630.0,131.3 630.5,129.6 631.0,127.4 631.5,121.5 632.0,117.3 632.5,112.7 633.0,106.9 633.5,104.0 634.0,107.2 634.5,113.6 635.0,119.4 635.5,119.9 636.0,119.7 636.5,115.6 637.0,122.0 637.5,126.1 638.0,129.8 638.5,131.3 639.0,135.9 639.5,138.4 640.0,143.4 640.5,148.5 641.0,153.2 641.5,155.8 642.0,155.8 642.5,155.8 643.0,155.8 643.5,155.8 644.0,155.8 644.5,155.8 645.0,155.8 645.5,155.8 646.0,155.8 646.5,155.8 647.0,155.8 647.5,155.8 648.0,155.8 648.5,155.8 649.0,155.8 649.5,155.8 650.0,155.8 650.5,155.8 651.0,155.8 651.5,155.8 652.0,155.8 652.5,155.8 653.0,155.8 653.5,155.8 654.0,155.8 654.5,155.8 655.0,141.4 655.5,122.5 656.0,96.4 656.5,78.9 657.0,83.2 657.5,89.9 658.0,83.3 658.5,78.9 659.0,88.4 659.5,91.8 660.0,102.8 660.5,113.7 661.0,123.4 661.5,133.0 662.0,141.1 662.5,147.5 663.0,153.6 663.5,155.8 664.0,155.8 664.5,155.8 665.0,155.8 665.5,155.8 666.0,155.8 666.5,155.8 667.0,155.8 667.5,155.8 668.0,155.8 668.5,155.8 669.0,155.8 669.5,155.8 670.0,155.8 670.5,155.8 671.0,155.8 671.5,155.8 672.0,155.8 672.5,155.8 673.0,155.8 673.5,155.8 674.0,155.8 674.5,155.8 675.0,155.8 675.5,155.8 676.0,155.8 676.5,155.8 677.0,155.8 677.5,155.8 678.0,155.8 678.5,155.8 679.0,155.8 679.5,155.8 680.0,155.8 680.5,155.8 681.0,155.8 681.5,155.8 682.0,155.8 682.5,155.8 683.0,155.8 683.5,155.6 684.0,146.5 684.5,135.7 685.0,127.2 685.5,120.6 686.0,113.7 686.5,94.1 687.0,59.0 687.5,96.5 688.0,119.8 688.5,116.0 689.0,117.2 689.5,116.6 690.0,117.1 690.5,115.5 691.0,115.9 691.5,117.5 692.0,122.2 692.5,127.0 693.0,131.2 693.5,134.2 694.0,138.7 694.5,143.0 695.0,147.7 695.5,149.2 696.0,149.9 696.5,155.8 696.5,156.9 696.0,161.9 695.5,163.1 695.0,164.9 694.5,168.2 694.0,174.3 693.5,175.6 693.0,182.9 692.5,184.0 692.0,192.2 691.5,194.1 691.0,196.7 690.5,198.2 690.0,197.0 689.5,198.0 689.0,196.2 688.5,198.6 688.0,195.1 687.5,223.9 687.0,266.0 686.5,227.7 686.0,203.0 685.5,191.2 685.0,182.6 684.5,172.9 684.0,164.7 683.5,159.6 683.0,156.9 682.5,156.9 682.0,156.9 681.5,156.9 681.0,156.9 680.5,156.9 680.0,156.9 679.5,156.9 679.0,156.9 678.5,156.9 678.0,156.9 677.5,156.9 677.0,156.9 676.5,156.9 676.0,156.9 675.5,156.9 675.0,156.9 674.5,156.9 674.0,156.9 673.5,156.9 673.0,156.9 672.5,156.9 672.0,156.9 671.5,156.9 671.0,156.9 670.5,156.9 670.0,156.9 669.5,156.9 669.0,156.9 668.5,156.9 668.0,156.9 667.5,156.9 667.0,156.9 666.5,156.9 666.0,156.9 665.5,156.9 665.0,156.9 664.5,156.9 664.0,156.9 663.5,156.9 663.0,158.1 662.5,162.8 662.0,168.7 661.5,175.3 661.0,182.1 660.5,190.6 660.0,202.2 659.5,210.7 659.0,223.1 658.5,234.1 658.0,223.5 657.5,221.7 657.0,227.7 656.5,248.4 656.0,224.2 655.5,203.4 655.0,175.7 654.5,156.9 654.0,156.9 653.5,156.9 653.0,156.9 652.5,156.9 652.0,156.9 651.5,156.9 651.0,156.9 650.5,156.9 650.0,156.9 649.5,156.9 649.0,156.9 648.5,156.9 648.0,156.9 647.5,156.9 647.0,156.9 646.5,156.9 646.0,156.9 645.5,156.9 645.0,156.9 644.5,156.9 644.0,156.9 643.5,156.9 643.0,156.9 642.5,156.9 642.0,156.9 641.5,156.9 641.0,159.1 640.5,163.3 640.0,168.0 639.5,172.0 639.0,174.7 638.5,180.5 638.0,180.8 637.5,188.9 637.0,192.7 636.5,201.0 636.0,197.9 635.5,197.7 635.0,193.9 634.5,201.8 634.0,206.7 633.5,208.0 633.0,200.1 632.5,198.1 632.0,190.8 631.5,190.2 631.0,184.0 630.5,181.2 630.0,181.3 629.5,178.5 629.0,178.8 628.5,180.3 628.0,180.4 627.5,179.3 627.0,178.1 626.5,179.8 626.0,180.6 625.5,179.9 625.0,178.5 624.5,178.3 624.0,178.4 623.5,180.7 623.0,178.0 622.5,181.0 622.0,185.3 621.5,191.3 621.0,183.9 620.5,179.6 620.0,176.7 619.5,171.0 619.0,165.0 618.5,158.5 618.0,156.9 617.5,156.9 617.0,156.9 616.5,156.9 616.0,156.9 615.5,156.9 615.0,156.9 614.5,156.9 614.0,156.9 613.5,156.9 613.0,156.9 612.5,156.9 612.0,156.9 611.5,156.9 611.0,156.9 610.5,156.9 610.0,156.9 609.5,156.9 609.0,156.9 608.5,156.9 608.0,156.9 607.5,156.9 607.0,156.9 606.5,156.9 606.0,156.9 605.5,156.9 605.0,156.9 604.5,156.9 604.0,156.9 603.5,156.9 603.0,156.9 602.5,156.9 602.0,156.9 601.5,156.9 601.0,156.9 600.5,156.9 600.0,156.9 599.5,156.9 599.0,156.9 598.5,156.9 598.0,159.0 597.5,163.6 597.0,166.4 596.5,171.9 596.0,175.8 595.5,178.3 595.0,180.4 594.5,183.1 594.0,188.2 593.5,197.4 593.0,195.1 592.5,190.9 592.0,191.6 591.5,189.9 591.0,189.2 590.5,185.9 590.0,187.0 589.5,181.8 589.0,182.7 588.5,183.0 588.0,179.5 587.5,181.1 587.0,183.0 586.5,181.3 586.0,179.7 585.5,180.0 585.0,180.4 584.5,182.7 584.0,185.9 583.5,189.9 583.0,193.0 582.5,201.3 582.0,205.4 581.5,211.2 581.0,210.1 580.5,202.1 580.0,196.3 579.5,190.3 579.0,186.3 578.5,182.6 578.0,179.2 577.5,176.2 577.0,174.0 576.5,168.2 576.0,162.2 575.5,157.4 575.0,156.9 574.5,156.9 574.0,156.9 573.5,156.9 573.0,156.9 572.5,156.9 572.0,156.9 571.5,156.9 571.0,156.9 570.5,156.9 570.0,156.9 569.5,156.9 569.0,156.9 568.5,156.9 568.0,156.9 567.5,156.9 567.0,156.9 566.5,156.9 566.0,156.9 565.5,156.9 565.0,156.9 564.5,156.9 564.0,156.9 563.5,156.9 563.0,156.9 562.5,156.9 562.0,156.9 561.5,160.6 561.0,165.3 560.5,168.3 560.0,173.0 559.5,177.0 559.0,179.8 558.5,183.7 558.0,190.7 557.5,188.7 557.0,187.4 556.5,188.3 556.0,186.8 555.5,190.4 555.0,191.3 554.5,186.6 554.0,197.2 553.5,208.3 553.0,228.0 552.5,215.2 552.0,210.6 551.5,205.4 551.0,208.9 550.5,216.9 550.0,240.0 549.5,224.2 549.0,218.8 548.5,215.6 548.0,208.3 547.5,202.8 547.0,199.0 546.5,193.1 546.0,192.1 545.5,194.4 545.0,197.1 544.5,206.5 544.0,210.4 543.5,211.8 543.0,202.3 542.5,194.1 542.0,189.9 541.5,182.1 541.0,168.0 540.5,159.9 540.0,156.9 539.5,156.9 539.0,156.9 538.5,156.9 538.0,156.9 537.5,156.9 537.0,156.9 536.5,156.9 536.0,156.9 535.5,156.9 535.0,156.9 534.5,156.9 534.0,156.9 533.5,156.9 533.0,156.9 532.5,156.9 532.0,156.9 531.5,156.9 531.0,156.9 530.5,156.9 530.0,156.9 529.5,156.9 529.0,156.9 528.5,156.9 528.0,156.9 527.5,156.9 527.0,156.9 526.5,156.9 526.0,156.9 525.5,156.9 525.0,156.9 524.5,156.9 524.0,156.9 523.5,156.9 523.0,160.0 522.5,164.3 522.0,168.7 521.5,169.5 521.0,172.0 520.5,176.2 520.0,182.5 519.5,181.1 519.0,177.3 518.5,172.9 518.0,167.1 517.5,161.7 517.0,157.8 516.5,156.9 516.0,156.9 515.5,156.9 515.0,159.1 514.5,167.0 514.0,179.8 513.5,203.6 513.0,196.8 512.5,193.2 512.0,199.0 511.5,201.8 511.0,197.8 510.5,201.5 510.0,216.6 509.5,218.8 509.0,207.4 508.5,199.6 508.0,192.2 507.5,179.2 507.0,166.4 506.5,156.9 506.0,156.9 505.5,156.9 505.0,156.9 504.5,156.9 504.0,156.9 503.5,157.2 503.0,161.2 502.5,166.1 502.0,169.8 501.5,174.7 501.0,177.1 500.5,178.0 500.0,179.5 499.5,181.9 499.0,191.7 498.5,199.5 498.0,197.4 497.5,187.4 497.0,179.5 496.5,172.5 496.0,163.7 495.5,156.9 495.0,156.9 494.5,156.9 494.0,156.9 493.5,156.9 493.0,156.9 492.5,156.9 492.0,159.0 491.5,163.4 491.0,167.2 490.5,172.0 490.0,176.2 489.5,189.2 489.0,200.7 488.5,203.3 488.0,192.7 487.5,186.6 487.0,183.6 486.5,183.1 486.0,184.3 485.5,193.7 485.0,201.6 484.5,213.0 484.0,198.9 483.5,193.3 483.0,184.3 482.5,171.6 482.0,160.7 481.5,156.9 481.0,156.9 480.5,156.9 480.0,156.9 479.5,156.9 479.0,156.9 478.5,156.9 478.0,156.9 477.5,156.9 477.0,156.9 476.5,156.9 476.0,156.9 475.5,156.9 475.0,156.9 474.5,156.9 474.0,160.8 473.5,165.3 473.0,169.2 472.5,173.1 472.0,172.4 471.5,172.0 471.0,173.2 470.5,174.3 470.0,177.5 469.5,182.6 469.0,187.1 468.5,193.2 468.0,186.3 467.5,181.7 467.0,176.9 466.5,168.6 466.0,160.9 465.5,156.9 465.0,156.9 464.5,156.9 464.0,156.9 463.5,156.9 463.0,156.9 462.5,156.9 462.0,156.9 461.5,156.9 461.0,156.9 460.5,156.9 460.0,156.9 459.5,158.9 459.0,163.4 458.5,167.9 458.0,171.1 457.5,175.4 457.0,179.0 456.5,181.8 456.0,180.9 455.5,182.3 455.0,189.1 454.5,190.7 454.0,188.6 453.5,185.3 453.0,186.8 452.5,187.7 452.0,196.0 451.5,206.0 451.0,223.0 450.5,204.1 450.0,199.3 449.5,190.5 449.0,184.4 448.5,180.0 448.0,169.9 447.5,159.8 447.0,156.9 446.5,156.9 446.0,156.9 445.5,156.9 445.0,156.9 444.5,156.9 444.0,156.9 443.5,156.9 443.0,156.9 442.5,156.9 442.0,156.9 441.5,160.3 441.0,164.7 440.5,169.7 440.0,172.7 439.5,178.3 439.0,181.1 438.5,179.1 438.0,181.3 437.5,179.8 437.0,178.5 436.5,181.1 436.0,181.2 435.5,181.2 435.0,181.0 434.5,183.4 434.0,191.3 433.5,203.3 433.0,217.0 432.5,204.2 432.0,196.6 431.5,188.9 431.0,183.2 430.5,175.2 430.0,169.7 429.5,165.7 429.0,161.0 428.5,157.0 428.0,156.9 427.5,156.9 427.0,156.9 426.5,156.9 426.0,156.9 425.5,156.9 425.0,156.9 424.5,156.9 424.0,158.8 423.5,162.6 423.0,166.4 422.5,171.0 422.0,174.1 421.5,178.1 421.0,182.7 420.5,187.0 420.0,186.9 419.5,190.2 419.0,194.4 418.5,203.5 418.0,200.4 417.5,194.3 417.0,189.6 416.5,186.0 416.0,189.9 415.5,192.9 415.0,202.5 414.5,213.5 414.0,238.0 413.5,218.1 413.0,208.9 412.5,202.1 412.0,192.6 411.5,186.7 411.0,186.2 410.5,190.0 410.0,188.1 409.5,188.2 409.0,183.8 408.5,181.1 408.0,177.4 407.5,173.6 407.0,178.2 406.5,181.5 406.0,177.1 405.5,163.9 405.0,156.9 404.5,156.9 404.0,156.9 403.5,156.9 403.0,156.9 402.5,156.9 402.0,156.9 401.5,156.9 401.0,156.9 400.5,156.9 400.0,156.9 399.5,156.9 399.0,156.9 398.5,156.9 398.0,156.9 397.5,156.9 397.0,156.9 396.5,156.9 396.0,156.9 395.5,156.9 395.0,156.9 394.5,156.9 394.0,156.9 393.5,156.9 393.0,156.9 392.5,156.9 392.0,156.9 391.5,156.9 391.0,156.9 390.5,156.9 390.0,156.9 389.5,156.9 389.0,156.9 388.5,156.9 388.0,156.9 387.5,156.9 387.0,156.9 386.5,156.9 386.0,156.9 385.5,156.9 385.0,156.9 384.5,156.9 384.0,156.9 383.5,156.9 383.0,156.9 382.5,156.9 382.0,156.9 381.5,156.9 381.0,156.9 380.5,156.9 380.0,156.9 379.5,156.9 379.0,156.9 378.5,156.9 378.0,157.4 377.5,158.6 377.0,161.1 376.5,163.8 376.0,167.0 375.5,170.0 375.0,171.8 374.5,174.5 374.0,176.0 373.5,177.7 373.0,178.4 372.5,192.0 372.0,182.9 371.5,174.4 371.0,171.1 370.5,167.8 370.0,163.8 369.5,163.1 369.0,162.5 368.5,161.5 368.0,160.9 367.5,159.3 367.0,157.7 366.5,156.9 366.0,156.9 365.5,156.9 365.0,157.7 364.5,159.3 364.0,160.7 363.5,161.5 363.0,162.5 362.5,162.8 362.0,163.6 361.5,165.2 361.0,166.5 360.5,169.8 360.0,176.0 359.5,167.8 359.0,165.4 358.5,163.9 358.0,164.6 357.5,165.6 357.0,167.8 356.5,170.7 356.0,165.9 355.5,164.4 355.0,163.9 354.5,168.2 354.0,178.5 353.5,191.7 353.0,224.0 352.5,206.7 352.0,193.7 351.5,187.4 351.0,183.5 350.5,177.1 350.0,175.2 349.5,173.4 349.0,171.6 348.5,169.1 348.0,166.9 347.5,169.9 347.0,174.2 346.5,177.8 346.0,184.4 345.5,193.6 345.0,200.6 344.5,202.9 344.0,209.1 343.5,203.3 343.0,205.1 342.5,222.0 342.0,207.7 341.5,206.2 341.0,201.3 340.5,195.0 340.0,188.1 339.5,180.7 339.0,174.5 338.5,167.0 338.0,168.0 337.5,169.0 337.0,170.3 336.5,173.3 336.0,178.0 335.5,183.3 335.0,185.6 334.5,183.5 334.0,185.3 333.5,185.9 333.0,189.6 332.5,201.0 332.0,189.6 331.5,178.9 331.0,175.8 330.5,171.3 330.0,167.4 329.5,165.9 329.0,165.4 328.5,164.5 328.0,163.4 327.5,167.6 327.0,171.9 326.5,179.3 326.0,190.0 325.5,183.8 325.0,177.9 324.5,172.8 324.0,170.2 323.5,168.0 323.0,166.0 322.5,164.0 322.0,164.6 321.5,165.7 321.0,166.9 320.5,168.8 320.0,170.8 319.5,179.9 319.0,175.1 318.5,171.6 318.0,171.0 317.5,170.7 317.0,169.9 316.5,167.6 316.0,166.7 315.5,167.8 315.0,169.4 314.5,169.4 314.0,171.6 313.5,193.9 313.0,228.9 312.5,249.1 312.0,225.3 311.5,203.0 311.0,191.3 310.5,179.8 310.0,170.0 309.5,174.1 309.0,177.8 308.5,189.7 308.0,232.1 307.5,269.1 307.0,209.2 306.5,183.3 306.0,181.2 305.5,185.5 305.0,205.0 304.5,181.2 304.0,161.6 303.5,156.9 303.0,156.9 302.5,156.9 302.0,156.9 301.5,156.9 301.0,156.9 300.5,156.9 300.0,156.9 299.5,156.9 299.0,156.9 298.5,156.9 298.0,156.9 297.5,156.9 297.0,156.9 296.5,156.9 296.0,156.9 295.5,156.9 295.0,156.9 294.5,156.9 294.0,156.9 293.5,156.9 293.0,156.9 292.5,156.9 292.0,156.9 291.5,156.9 291.0,156.9 290.5,156.9 290.0,156.9 289.5,156.9 289.0,156.9 288.5,156.9 288.0,156.9 287.5,156.9 287.0,156.9 286.5,156.9 286.0,156.9 285.5,156.9 285.0,156.9 284.5,156.9 284.0,156.9 283.5,156.9 283.0,156.9 282.5,156.9 282.0,156.9 281.5,156.9 281.0,156.9 280.5,156.9 280.0,156.9 279.5,156.9 279.0,156.9 278.5,156.9 278.0,156.9 277.5,156.9 277.0,156.9 276.5,156.9 276.0,156.9 275.5,156.9 275.0,156.9 274.5,156.9 274.0,156.9 273.5,157.9 273.0,160.8 272.5,164.3 272.0,166.5 271.5,171.1 271.0,174.7 270.5,176.4 270.0,185.0 269.5,209.0 269.0,202.4 268.5,188.3 268.0,180.1 267.5,176.9 267.0,170.0 266.5,174.4 266.0,178.2 265.5,181.7 265.0,184.7 264.5,189.6 264.0,210.0 263.5,193.0 263.0,189.7 262.5,187.1 262.0,185.2 261.5,188.8 261.0,194.9 260.5,209.5 260.0,208.4 259.5,193.2 259.0,189.1 258.5,186.8 258.0,184.0 257.5,185.2 257.0,188.4 256.5,191.6 256.0,208.0 255.5,191.6 255.0,184.4 254.5,180.5 254.0,177.3 253.5,177.9 253.0,178.6 252.5,182.1 252.0,194.0 251.5,175.6 251.0,156.9 250.5,156.9 250.0,156.9 249.5,156.9 249.0,156.9 248.5,156.9 248.0,156.9 247.5,156.9 247.0,156.9 246.5,156.9 246.0,156.9 245.5,156.9 245.0,156.9 244.5,156.9 244.0,156.9 243.5,156.9 243.0,156.9 242.5,156.9 242.0,156.9 241.5,156.9 241.0,156.9 240.5,156.9 240.0,156.9 239.5,156.9 239.0,156.9 238.5,156.9 238.0,156.9 237.5,156.9 237.0,156.9 236.5,156.9 236.0,156.9 235.5,156.9 235.0,156.9 234.5,156.9 234.0,156.9 233.5,156.9 233.0,156.9 232.5,156.9 232.0,156.9 231.5,156.9 231.0,156.9 230.5,156.9 230.0,156.9 229.5,156.9 229.0,156.9 228.5,156.9 228.0,156.9 227.5,156.9 227.0,156.9 226.5,156.9 226.0,156.9 225.5,156.9 225.0,156.9 224.5,156.9 224.0,156.9 223.5,156.9 223.0,156.9 222.5,156.9 222.0,156.9 221.5,156.9 221.0,156.9 220.5,156.9 220.0,156.9 219.5,156.9 219.0,156.9 218.5,156.9 218.0,156.9 217.5,156.9 217.0,156.9 216.5,156.9 216.0,156.9 215.5,156.9 215.0,156.9 214.5,156.9 214.0,156.9 213.5,156.9 213.0,156.9 212.5,156.9 212.0,156.9 211.5,156.9 211.0,156.9 210.5,156.9 210.0,156.9 209.5,156.9 209.0,156.9 208.5,158.7 208.0,160.2 207.5,159.2 207.0,159.7 206.5,161.6 206.0,166.1 205.5,173.2 205.0,181.0 204.5,173.2 204.0,167.8 203.5,174.5 203.0,168.6 202.5,167.9 202.0,172.1 201.5,179.3 201.0,190.0 200.5,184.3 200.0,178.8 199.5,180.2 199.0,168.6 198.5,169.3 198.0,179.3 197.5,166.7 197.0,173.8 196.5,170.6 196.0,163.6 195.5,168.0 195.0,173.6 194.5,179.7 194.0,186.0 193.5,179.7 193.0,173.6 192.5,176.5 192.0,172.0 191.5,164.8 191.0,161.2 190.5,161.3 190.0,161.8 189.5,159.6 189.0,160.9 188.5,160.7 188.0,162.5 187.5,160.1 187.0,165.1 186.5,166.9 186.0,162.2 185.5,164.7 185.0,171.6 184.5,168.1 184.0,162.2 183.5,166.6 183.0,167.7 182.5,162.8 182.0,163.5 181.5,168.3 181.0,173.1 180.5,177.5 180.0,188.0 179.5,174.1 179.0,170.9 178.5,194.6 178.0,222.0 177.5,201.2 177.0,182.2 176.5,193.1 176.0,195.9 175.5,178.2 175.0,206.3 174.5,206.6 174.0,230.0 173.5,211.2 173.0,193.6 172.5,192.0 172.0,177.4 171.5,179.4 171.0,178.1 170.5,213.8 170.0,255.0 169.5,206.7 169.0,170.3 168.5,160.4 168.0,156.9 167.5,156.9 167.0,156.9 166.5,156.9 166.0,156.9 165.5,156.9 165.0,156.9 164.5,156.9 164.0,156.9 163.5,156.9 163.0,156.9 162.5,156.9 162.0,156.9 161.5,156.9 161.0,156.9 160.5,156.9 160.0,156.9 159.5,156.9 159.0,156.9 158.5,156.9 158.0,156.9 157.5,156.9 157.0,156.9 156.5,156.9 156.0,156.9 155.5,156.9 155.0,156.9 154.5,156.9 154.0,156.9 153.5,156.9 153.0,156.9 152.5,156.9 152.0,156.9 151.5,156.9 151.0,156.9 150.5,156.9 150.0,156.9 149.5,156.9 149.0,156.9 148.5,156.9 148.0,156.9 147.5,157.1 147.0,157.8 146.5,158.6 146.0,157.7 145.5,161.1 145.0,160.8 144.5,158.9 144.0,160.6 143.5,164.1 143.0,164.1 142.5,170.6 142.0,169.9 141.5,162.8 141.0,162.9 140.5,179.3 140.0,167.7 139.5,167.1 139.0,184.5 138.5,205.3 138.0,228.0 137.5,205.3 137.0,203.6 136.5,173.7 136.0,170.9 135.5,187.6 135.0,177.5 134.5,165.4 134.0,177.8 133.5,166.5 133.0,165.0 132.5,175.9 132.0,170.3 131.5,162.3 131.0,162.1 130.5,168.2 130.0,165.6 129.5,168.1 129.0,169.1 128.5,195.2 128.0,226.6 127.5,239.4 127.0,278.0 126.5,251.9 126.0,227.3 125.5,212.7 125.0,183.2 124.5,187.2 124.0,187.3 123.5,166.0 123.0,163.4 122.5,168.7 122.0,166.4 121.5,161.9 121.0,161.9 120.5,160.4 120.0,167.1 119.5,175.3 119.0,172.6 118.5,184.1 118.0,186.1 117.5,193.4 117.0,201.0 116.5,191.4 116.0,187.7 115.5,173.9 115.0,166.3 114.5,170.3 114.0,177.6 113.5,164.9 113.0,168.8 112.5,169.7 112.0,163.9 111.5,162.5 111.0,165.3 110.5,164.2 110.0,163.2 109.5,175.6 109.0,176.0 108.5,165.3 108.0,178.6 107.5,175.6 107.0,170.4 106.5,176.1 106.0,187.4 105.5,188.4 105.0,195.0 104.5,182.8 104.0,179.2 103.5,170.3 103.0,172.1 102.5,182.5 102.0,179.8 101.5,197.6 101.0,217.1 100.5,238.0 100.0,217.1 99.5,197.6 99.0,200.7 98.5,185.6 98.0,170.8 97.5,181.7 97.0,172.5 96.5,163.9 96.0,166.2 95.5,168.9 95.0,163.7 94.5,164.3 94.0,167.7 93.5,176.8 93.0,165.9 92.5,165.8 92.0,166.8 91.5,174.0 91.0,167.9 90.5,167.6 90.0,181.3 89.5,198.2 89.0,187.8 88.5,186.0 88.0,197.5 87.5,211.9 87.0,227.0 86.5,215.0 86.0,203.4 85.5,200.8 85.0,182.0 84.5,174.7 84.0,179.5 83.5,178.3 83.0,192.9 82.5,176.7 82.0,167.5 81.5,176.3 81.0,178.5 80.5,166.8 80.0,166.0 79.5,174.6 79.0,184.7 78.5,167.6 78.0,173.1 77.5,177.1 77.0,171.9 76.5,176.2 76.0,166.1 75.5,174.4 75.0,190.3 74.5,201.1 74.0,222.3 73.5,245.0 73.0,228.7 72.5,213.1 72.0,198.3 71.5,184.5 71.0,178.2 70.5,170.3 70.0,179.2 69.5,174.6 69.0,164.5 68.5,167.2 68.0,178.7 67.5,177.0 67.0,167.2 66.5,163.8 66.0,168.5 65.5,167.0 65.0,163.8 64.5,167.6 64.0,177.1 63.5,173.5 63.0,163.9 62.5,162.5 62.0,169.8 61.5,169.1 61.0,164.9 60.5,165.9 60.0,160.2 59.5,159.9 59.0,164.3 58.5,167.4 58.0,162.4 57.5,165.0 57.0,172.4 56.5,164.8 56.0,174.6 55.5,177.8 55.0,194.1 54.5,211.9 54.0,231.0 53.5,215.0 53.0,199.9 52.5,185.7 52.0,172.8 51.5,180.1 51.0,171.1 50.5,171.2 50.0,180.0 49.5,177.5 49.0,187.6 48.5,198.5 48.0,210.0 47.5,200.9 47.0,200.2 46.5,183.7 46.0,175.9 45.5,169.9 45.0,181.2 44.5,169.1 44.0,168.1 43.5,170.1 43.0,173.3 42.5,169.9 42.0,190.7 41.5,189.5 41.0,195.4 40.5,205.0 40.0,215.0 39.5,200.0 39.0,186.0 38.5,180.0 38.0,186.8 37.5,176.0 37.0,195.0 36.5,197.6 36.0,193.1 35.5,210.4 35.0,229.0 34.5,210.4 34.0,193.1 33.5,177.2 33.0,190.2 32.5,179.8 32.0,168.5 31.5,178.7 31.0,185.0 30.5,198.5 30.0,213.0 29.5,200.9 29.0,194.1 28.5,179.0 28.0,176.1 27.5,178.3 27.0,170.7 26.5,170.3 26.0,183.2 25.5,193.2 25.0,189.4 24.5,200.9 24.0,213.0 23.5,197.9 23.0,175.9 22.5,194.6 22.0,178.6 21.5,206.3 21.0,242.0 20.5,200.0 20.0,181.8 19.5,160.5 19.0,156.9 18.5,156.9 18.0,156.9 17.5,156.9 17.0,156.9 16.5,156.9 16.0,156.9 15.5,156.9 15.0,156.9 14.5,156.9 14.0,156.9 13.5,156.9 13.0,156.9 12.5,156.9 12.0,156.9 11.5,156.9 11.0,156.9 10.5,156.9 10.0,156.9 9.5,156.9 9.0,156.9 8.5,156.9 8.0,156.9 7.5,156.9 7.0,156.9 6.5,156.9 6.0,156.9 5.5,156.9 5.0,156.9 4.5,156.9 4.0,156.9 3.5,156.9 3.0,156.9 2.5,156.9 2.0,156.9 1.5,156.9 1.0,156.9 0.5,156.9 0.0,156.9"/>
  <path d="M21.0 156.4V79.0M30.0 156.4V96.0M35.0 156.4V100.0M40.0 156.4V97.0M48.0 156.4V102.0M54.0 156.4V95.0M66.0 156.4V107.0M73.5 156.4V89.0M87.0 156.4V97.0M100.5 156.4V92.0M105.0 156.4V117.0M117.0 156.4V109.0M127.0 156.4V82.0M138.0 156.4V107.0M21.5 156.4V112.7M22.5 156.4V125.8M24.0 156.4V111.7M25.8 156.4V103.8M29.1 156.4V125.8M30.3 156.4V112.1M33.8 156.4V123.3M35.4 156.4V122.8M36.6 156.4V119.3M38.5 156.4V125.7M40.0 156.4V105.0M41.1 156.4V110.0M43.1 156.4V124.3M44.8 156.4V121.1M46.4 156.4V113.7M48.2 156.4V103.0M49.6 156.4V118.6M53.1 156.4V118.3M55.1 156.4V112.2M62.5 156.4V124.5M64.6 156.4V115.1M66.0 156.4V123.4M72.8 156.4V124.4M74.4 156.4V115.0M76.8 156.4V116.1M80.5 156.4V117.3M81.7 156.4V114.3M83.1 156.4V128.0M85.1 156.4V107.6M86.4 156.4V113.9M87.4 156.4V121.8M89.6 156.4V124.0M96.1 156.4V127.0M98.0 156.4V128.4M99.4 156.4V109.3M100.8 156.4V97.1M103.2 156.4V120.8M104.6 156.4V126.8M106.7 156.4V126.9M108.3 156.4V124.8M113.8 156.4V119.4M116.4 156.4V115.6M118.3 156.4V128.0M124.7 156.4V121.9M126.2 156.4V107.8M128.1 156.4V104.5M129.7 156.4V121.8M133.2 156.4V126.7M135.2 156.4V117.3M136.7 156.4V124.7M137.9 156.4V122.7M21.0 156.4V242.0M24.0 156.4V213.0M30.0 156.4V213.0M35.0 156.4V229.0M40.0 156.4V215.0M48.0 156.4V210.0M54.0 156.4V231.0M73.5 156.4V245.0M87.0 156.4V227.0M100.5 156.4V238.0M105.0 156.4V195.0M117.0 156.4V201.0M127.0 156.4V278.0M138.0 156.4V228.0M20.4 156.4V204.3M22.5 156.4V195.1M23.6 156.4V201.9M25.7 156.4V200.7M29.1 156.4V198.7M30.3 156.4V196.9M32.9 156.4V195.6M34.1 156.4V195.3M35.1 156.4V217.5M36.7 156.4V209.1M38.2 156.4V191.9M39.8 156.4V204.0M41.8 156.4V200.7M45.1 156.4V184.6M47.1 156.4V204.5M48.4 156.4V187.7M54.6 156.4V192.2M72.9 156.4V216.4M74.7 156.4V199.5M79.0 156.4V185.9M81.2 156.4V184.5M83.0 156.4V193.7M85.5 156.4V202.1M86.8 156.4V213.1M88.2 156.4V201.5M89.3 156.4V205.6M97.3 156.4V185.4M99.0 156.4V203.3M101.0 156.4V208.1M102.6 156.4V186.7M105.9 156.4V189.0M107.8 156.4V185.0M116.2 156.4V195.3M118.3 156.4V188.5M124.2 156.4V197.5M125.6 156.4V217.4M126.8 156.4V221.3M128.0 156.4V228.2M135.3 156.4V193.7M137.1 156.4V209.6M138.4 156.4V199.0M170.0 156.4V95.0M174.0 156.4V102.0M178.0 156.4V99.0M181.0 156.4V117.0M194.0 156.4V125.0M201.0 156.4V119.0M205.0 156.4V125.0M169.6 156.4V115.2M170.7 156.4V113.4M174.2 156.4V112.3M175.9 156.4V123.8M179.7 156.4V128.1M197.6 156.4V127.7M170.0 156.4V255.0M174.0 156.4V230.0M178.0 156.4V222.0M194.0 156.4V186.0M201.0 156.4V190.0M172.6 156.4V194.2M173.6 156.4V188.7M174.9 156.4V210.6M176.3 156.4V207.7M178.1 156.4V195.9M180.0 156.4V188.7M260.3 156.4V100.0M264.0 156.4V103.0M269.4 156.4V99.0M256.0 156.4V208.0M260.3 156.4V219.0M264.0 156.4V210.0M269.4 156.4V215.0M307.6 156.4V52.0M341.0 156.4V103.0M345.0 156.4V95.0M353.0 156.4V101.0M307.6 156.4V282.0M312.7 156.4V259.0M342.3 156.4V229.0M353.0 156.4V224.0M344.0 156.4V209.8M414.0 156.4V238.0M509.7 156.4V230.0M550.0 156.4V81.0M550.0 156.4V240.0M553.0 156.4V228.0M656.4 156.4V70.0M658.6 156.4V70.0M656.4 156.4V259.0M658.6 156.4V243.0M687.0 156.4V59.0M687.0 156.4V266.0" stroke="#1a9cf5" stroke-width="1.2" fill="none"/></g>
  <g font-family="Liberation Sans, sans-serif" font-size="11" fill="#d6d6d6" text-anchor="middle">
    <text x="601.5" y="481">5</text><text x="702.5" y="481">10</text><text x="803.5" y="481">15</text>
    <text x="904.5" y="481">20</text><text x="1005.5" y="481">25</text><text x="1106.5" y="481">30</text>
  </g>
</svg>

<!-- PLAYBACK CONTROLS -->
<svg style="position:absolute;left:500px;top:488px" width="180" height="20" viewBox="0 0 180 20">
  <g fill="#a9a9a9"><rect x="6" y="4" width="2.500" height="12"/><path d="M18 4v12l-9-6z"/></g>
  <g fill="#1c1c1c"><path d="M36 4v12l-8-6zM44 4v12l-8-6z"/><path d="M55 4l11 6-11 6z"/><path d="M100 4l8 6-8 6zM108 4l8 6-8 6z"/></g>
  <rect x="78" y="4" width="12" height="12" fill="#a9a9a9"/>
  <g fill="#a9a9a9"><path d="M126 4l9 6-9 6z"/><rect x="135.500" y="4" width="2.500" height="12"/></g>
  <g fill="none" stroke="#1c1c1c">
    <path d="M148.500 3l14.500 14" stroke-width="2"/>
    <path d="M156 4a6 6 0 0 1 6 5.500" stroke-width="2.200"/>
    <path d="M155 16.500a6 6 0 0 1-5.500-5.500" stroke-width="2.200"/>
    <path d="M153 1.500l4 2.500-4 2.500zM158 19l-4-2.500 4-2.500zM159.500 8l5 0-2.500 4zM152 12.500l-5 0 2.500-4z" fill="#1c1c1c" stroke="none"/>
  </g>
</svg>
<div class="ar" style="position:absolute;left:1080px;top:490px;width:113px;text-align:right;font-size:10.700px;color:#111;white-space:nowrap">T = 00:00:00.000</div>

<!-- ROI SIGNAL PANEL -->
<div class="pn" style="left:500px;top:510px;width:699px;height:225px"></div>
<div id="strip" class="ar"><i class="g" style="left:16.2px;width:0.8px"></i><div class="y" style="left:17.0px;width:6.3px">f</div><i class="g" style="left:23.3px;width:0.7px"></i><i class="g" style="left:25.5px;width:2.5px"></i><i class="yy" style="left:28.0px;width:2.2px"></i><i class="g" style="left:30.2px;width:1.8px"></i><div class="y" style="left:32.0px;width:9.3px">y</div><i class="g" style="left:41.3px;width:0.7px"></i><i class="g" style="left:44.3px;width:0.9px"></i><i class="yy" style="left:45.2px;width:3.0px"></i><i class="g" style="left:48.2px;width:1.8px"></i><div class="y" style="left:50.0px;width:8.2px">n</div><i class="g" style="left:58.2px;width:0.8px"></i><i class="g" style="left:60.2px;width:0.8px"></i><i class="g" style="left:62.0px;width:3.7px"></i><i class="yy" style="left:65.7px;width:2.3px"></i><i class="g" style="left:68.0px;width:1.8px"></i><div class="y" style="left:69.8px;width:6.4px">y</div><i class="g" style="left:76.2px;width:0.8px"></i><i class="g" style="left:78.5px;width:0.7px"></i><i class="yy" style="left:79.2px;width:2.0px"></i><i class="g" style="left:81.2px;width:1.8px"></i><div class="y" style="left:83.0px;width:8.2px">n</div><i class="g" style="left:91.2px;width:0.8px"></i><i class="g" style="left:95.0px;width:1.2px"></i><div class="y" style="left:96.2px;width:9.0px">y</div><i class="g" style="left:105.2px;width:0.8px"></i><i class="g" style="left:107.3px;width:0.9px"></i><i class="yy" style="left:108.2px;width:1.0px"></i><i class="g" style="left:109.2px;width:1.8px"></i><div class="y" style="left:111.0px;width:8.3px">n</div><i class="g" style="left:119.3px;width:0.7px"></i><i class="g" style="left:122.0px;width:1.0px"></i><div class="y" style="left:123.0px;width:6.0px">c</div><i class="g" style="left:129.0px;width:3.8px"></i><div class="y" style="left:132.8px;width:10.5px">ca</div><i class="g" style="left:143.3px;width:0.7px"></i><i class="g" style="left:169.3px;width:0.7px"></i><i class="yy" style="left:170.0px;width:1.2px"></i><i class="g" style="left:171.2px;width:0.8px"></i><i class="g" style="left:173.2px;width:0.8px"></i><div class="y" style="left:174.0px;width:6.2px">a</div><i class="g" style="left:180.2px;width:1.8px"></i><i class="yy" style="left:182.0px;width:2.0px"></i><i class="g" style="left:184.0px;width:0.7px"></i><i class="g" style="left:186.0px;width:2.0px"></i><i class="yy" style="left:188.0px;width:0.8px"></i><i class="g" style="left:188.8px;width:3.0px"></i><i class="yy" style="left:191.8px;width:2.2px"></i><i class="g" style="left:194.0px;width:0.8px"></i><i class="g" style="left:196.0px;width:1.0px"></i><div class="y" style="left:197.0px;width:8.3px">y</div><i class="g" style="left:205.3px;width:0.7px"></i><i class="g" style="left:250.0px;width:1.0px"></i><i class="yy" style="left:251.0px;width:1.2px"></i><i class="g" style="left:252.2px;width:0.8px"></i><i class="g" style="left:254.2px;width:0.8px"></i><div class="y" style="left:255.0px;width:5.0px">y</div><i class="g" style="left:260.0px;width:0.8px"></i><i class="g" style="left:262.0px;width:3.0px"></i><div class="y" style="left:265.0px;width:6.0px">w</div><i class="g" style="left:271.0px;width:0.8px"></i><i class="g" style="left:303.0px;width:0.7px"></i><i class="g" style="left:305.2px;width:1.5px"></i><div class="y" style="left:306.7px;width:7.3px">a</div><i class="g" style="left:314.0px;width:2.0px"></i><i class="yy" style="left:316.0px;width:3.0px"></i><i class="g" style="left:319.0px;width:0.8px"></i><i class="g" style="left:321.2px;width:0.8px"></i><i class="yy" style="left:322.0px;width:1.5px"></i><i class="g" style="left:323.5px;width:0.7px"></i><i class="g" style="left:325.3px;width:0.7px"></i><i class="yy" style="left:326.0px;width:1.2px"></i><i class="g" style="left:327.2px;width:1.6px"></i><div class="y" style="left:328.8px;width:4.4px">s</div><i class="g" style="left:333.2px;width:0.8px"></i><i class="g" style="left:335.2px;width:0.8px"></i><div class="y" style="left:336.0px;width:7.0px">y</div><i class="g" style="left:343.0px;width:0.8px"></i><i class="g" style="left:345.0px;width:1.0px"></i><div class="y" style="left:346.0px;width:15.0px">de</div><i class="g" style="left:361.0px;width:0.8px"></i><i class="g" style="left:364.0px;width:0.8px"></i><i class="g" style="left:366.0px;width:2.0px"></i><div class="y" style="left:368.0px;width:5.0px">c</div><i class="g" style="left:373.0px;width:0.8px"></i><i class="g" style="left:405.3px;width:0.7px"></i><div class="y" style="left:406.0px;width:14.0px">ye</div><i class="g" style="left:420.0px;width:1.0px"></i><i class="g" style="left:425.2px;width:0.8px"></i><div class="y" style="left:426.0px;width:10.0px">no</div><i class="g" style="left:436.0px;width:0.8px"></i><i class="g" style="left:443.0px;width:1.0px"></i><div class="y" style="left:444.0px;width:11.0px">ye</div><i class="g" style="left:455.0px;width:1.0px"></i><i class="g" style="left:461.0px;width:1.0px"></i><div class="y" style="left:462.0px;width:8.0px">n</div><i class="g" style="left:470.0px;width:1.0px"></i><i class="g" style="left:477.0px;width:1.0px"></i><div class="y" style="left:478.0px;width:8.7px">y</div><i class="g" style="left:486.7px;width:1.1px"></i><i class="g" style="left:491.0px;width:1.0px"></i><div class="y" style="left:492.0px;width:6.0px">n</div><i class="g" style="left:498.0px;width:1.0px"></i><i class="g" style="left:500.0px;width:0.5px"></i><i class="g" style="left:501.7px;width:1.3px"></i><div class="y" style="left:503.0px;width:6.2px">y</div><i class="g" style="left:509.2px;width:0.8px"></i><i class="g" style="left:513.2px;width:0.8px"></i><div class="y" style="left:514.0px;width:4.3px">n</div><i class="g" style="left:518.3px;width:0.7px"></i><i class="g" style="left:536.2px;width:0.8px"></i><div class="y" style="left:537.0px;width:13.0px">ye</div><i class="g" style="left:550.0px;width:0.8px"></i><i class="g" style="left:570.2px;width:0.8px"></i><div class="yc" style="left:571.0px;width:21.0px">yes</div><i class="g" style="left:592.0px;width:0.9px"></i><i class="g" style="left:613.3px;width:0.7px"></i><div class="yc" style="left:614.0px;width:21.0px">yes</div><i class="g" style="left:635.0px;width:1.0px"></i><i class="g" style="left:649.4px;width:0.8px"></i><div class="y" style="left:650.2px;width:6.6px">y</div><i class="g" style="left:656.8px;width:1.0px"></i><i class="g" style="left:678.2px;width:0.8px"></i><div class="y" style="left:679.0px;width:7.1px">y</div><i class="g" style="left:686.1px;width:0.9px"></i></div>

<!-- POPUP -->
<div id="pop">
  <div class="ph" style="top:0"></div><div class="pt" style="left:9.70px;letter-spacing:-0.539px;top:5px">LABELS</div>
  <div style="left:0;top:58px;width:186px;height:33px;background:#ececec"></div>
  <div class="ph" style="top:91px"></div><div class="pt" style="left:9.65px;letter-spacing:-0.215px;top:96px">LABEL DEFINITIONS</div>
  <svg style="left:9px;top:28px" width="25" height="26" viewBox="0 0 25 26"><use href="#sig"/><use href="#fold" x="10" y="12"/></svg>
  <svg style="left:9px;top:62px" width="25" height="26" viewBox="0 0 25 26"><use href="#sig"/>
    <rect x="10.500" y="12.500" width="12" height="12" fill="url(#fo)" stroke="#6f8fc0"/><path d="M16.500 12.500v12M10.500 18.500h12" stroke="#6f8fc0" stroke-width="1"/></svg>
  <svg style="left:8px;top:119px" width="25" height="25" viewBox="0 0 25 25">
    <rect x="0.500" y="0.500" width="21" height="19" fill="#fdfdfd" stroke="#8a8a8a"/><rect x="1" y="1" width="20" height="3" fill="#6f9fd8"/>
    <path d="M4 7.500h2M8 7.500h10M4 10.500h2M8 10.500h10M4 13.500h2M8 13.500h10M4 16.500h2M8 16.500h6" stroke="#222" stroke-width="1.200"/>
    <use href="#fold" x="11" y="12"/></svg>
  <svg style="left:9px;top:152px" width="25" height="27" viewBox="0 0 25 27">
    <path d="M2.500 1.500h13l4 4v18h-17z" fill="#fcfcfc" stroke="#8e8e8e"/><path d="M15.500 1.500v4h4" fill="#ececec" stroke="#a8a8a8"/>
    <path d="M5 6.500h5M8 9.500h6M9 12.500h7M8 15.500h6M5 18.500h5" stroke="#a8a8a8"/>
    <path d="M8.500 25.500c0-6.500 2.500-10 7.500-10v-3.500l7 5.800-7 5.800v-3.500c-3 0-4.200 1.500-4.700 5.400z" fill="url(#eg)" stroke="#3f8a1c" stroke-width="0.900"/></svg>
  <div class="pi" style="left:42.10px;letter-spacing:-0.141px;top:34px">To File</div>
  <div class="pi" style="left:42.15px;letter-spacing:-0.101px;top:68px">To Workspace</div>
  <div class="pi" style="left:42.10px;letter-spacing:-0.141px;top:125px">To File</div>
  <div class="pi" style="left:42.15px;letter-spacing:-0.229px;top:159px">Generate MATLAB Script</div>
</div>
<!-- CURSOR -->
<svg style="position:absolute;left:700px;top:215px;z-index:30" width="14" height="22" viewBox="0 0 14 22">
  <path d="M1 1v16l4-3.500 2.800 6.500 2.600-1.100-2.800-6.300h5.400z" fill="#fff" stroke="#000" stroke-width="1"/>
</svg>

<svg width="0" height="0" style="position:absolute">
  <defs>
    <g id="plus"><path d="M5.500 0.500h5v5h5v5h-5v5h-5v-5h-5v-5h5z" fill="#8cc63f" stroke="#3d7d14"/><path d="M6.500 1.500h3v5h5v1.500h-13v-1.500h5z" fill="#c3e58a" opacity=".8"/></g>
    <g id="trash"><path d="M2 4.500h11l-1 11h-9z" fill="#dcdcdc" stroke="#bdbdbd"/><path d="M1 3.500c0-3 13-3 13 0z" fill="#e4e4e4" stroke="#bdbdbd"/><path d="M5 6v8M7.500 6v8M10 6v8" stroke="#c6c6c6"/></g>
    <g id="sig"><rect x="0.500" y="0.500" width="21" height="21" fill="#000" stroke="#7a7a7a"/>
      <rect x="2.500" y="1.700" width="5.500" height="18.600" fill="#5f5c2c" stroke="#f4c91a" stroke-width="1.300"/>
      <path d="M5.200 3.500l1.300 4-0.700 2 1.400 2-1.400 2 0.700 2-1.300 4-1.300-4 0.700-2-1.400-2 1.400-2-0.700-2z" fill="#62aaa0"/>
      <path d="M0.500 11.500h21" stroke="#1a9cf5" stroke-width="1.200" fill="none"/>
      <path d="M10.500 8.500v5.500M15.700 3v14.500" stroke="#1a9cf5" stroke-width="1.700" fill="none"/>
      <path d="M12.200 10v3M14 7.500v6.500M17.500 10v3" stroke="#1a9cf5" stroke-width="1" fill="none"/></g>
    <linearGradient id="fo" x1="0" y1="0" x2="1" y2="1"><stop offset="0" stop-color="#ffffff"/><stop offset="0.55" stop-color="#fff4c8"/><stop offset="1" stop-color="#f0cf7a"/></linearGradient>
    <g id="fold"><path d="M0.500 1.500h5.500l1-1h5.500v2.500h0.500v9.500h-12.500z" fill="url(#fo)" stroke="#9a6a1e"/><path d="M6.500 2.700h6" stroke="#c79a48" fill="none"/></g>
  </defs>
</svg>

</body>
</html>
